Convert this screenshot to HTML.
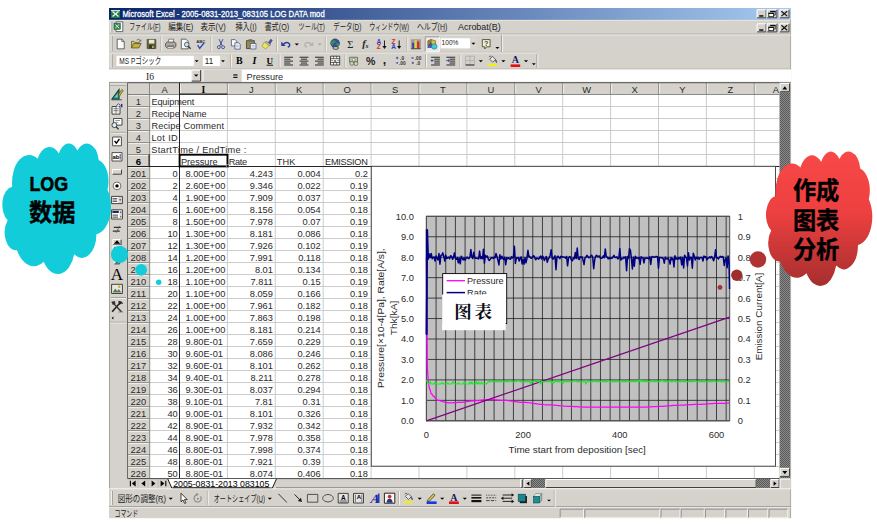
<!DOCTYPE html>
<html><head><meta charset="utf-8"><title>Microsoft Excel - LOG DATA</title><style>html,body{margin:0;padding:0;background:#fff;overflow:hidden}svg{display:block;font-family:"Liberation Sans",sans-serif}text{white-space:pre}</style></head><body>
<svg width="877" height="524" viewBox="0 0 877 524">
<defs><linearGradient id="tg" x1="0" x2="1" y1="0" y2="0"><stop offset="0" stop-color="#0a246a"/><stop offset="1" stop-color="#a6caf0"/></linearGradient><linearGradient id="rg" x1="0" x2="0" y1="0" y2="1"><stop offset="0" stop-color="#f84848"/><stop offset="0.45" stop-color="#ee4040"/><stop offset="1" stop-color="#a62e2e"/></linearGradient><pattern id="dith" width="2" height="2" patternUnits="userSpaceOnUse"><rect width="2" height="2" fill="#8a8a8a"/><rect width="1" height="1" fill="#5a5a5a"/><rect x="1" y="1" width="1" height="1" fill="#5a5a5a"/></pattern></defs>
<rect x="109" y="8" width="682" height="510.2" fill="#d5d2cb"/>
<rect x="109" y="8" width="682" height="11.9" fill="url(#tg)"/>
<line x1="109" y1="20.4" x2="791" y2="20.4" stroke="#eceae4" stroke-width="0.8"/>
<line x1="790.6" y1="20" x2="790.6" y2="518" stroke="#a6a29a" stroke-width="0.8"/>
<rect x="111" y="10" width="9" height="8" fill="#1e7a46"/>
<path d="M112.5 11.5L118.5 16.5M118.5 11.5L112.5 16.5" fill="none" stroke="#e8f4ea" stroke-width="1.3"/>
<rect x="111" y="10" width="9" height="1.2" fill="#cfe3d2"/>
<text x="122.4" y="17.3" font-size="8.8" textLength="202.3" lengthAdjust="spacingAndGlyphs" fill="#fff" stroke="#fff" stroke-width="0.28">Microsoft Excel - 2005-0831-2013_083105 LOG DATA mod</text>
<rect x="756.6" y="9.3" width="10" height="9" fill="#d5d2cb"/>
<path d="M757.1 17.8V9.8H766.1" fill="none" stroke="#ffffff" stroke-width="1"/>
<path d="M757.1 17.8H766.1V9.8" fill="none" stroke="#404040" stroke-width="1"/>
<rect x="766.6" y="9.3" width="10.8" height="9" fill="#d5d2cb"/>
<path d="M767.1 17.8V9.8H776.9" fill="none" stroke="#ffffff" stroke-width="1"/>
<path d="M767.1 17.8H776.9V9.8" fill="none" stroke="#404040" stroke-width="1"/>
<rect x="779.3" y="9.3" width="10.2" height="9" fill="#d5d2cb"/>
<path d="M779.8 17.8V9.8H789" fill="none" stroke="#ffffff" stroke-width="1"/>
<path d="M779.8 17.8H789V9.8" fill="none" stroke="#404040" stroke-width="1"/>
<rect x="759.2" y="15.2" width="4.2" height="1.5" fill="#111"/>
<path d="M770.6 11.5h4.6v3.6h-1.4" fill="none" stroke="#111" stroke-width="0.8"/>
<rect x="770.2" y="10.8" width="5.4" height="1.3" fill="#111"/>
<rect x="768.8" y="13.3" width="4.6" height="3.4" fill="#fff" stroke="#111" stroke-width="0.8"/>
<rect x="768.4" y="12.7" width="5.4" height="1.3" fill="#111"/>
<path d="M781.4 11.3l5.8 4.8M787.2 11.3l-5.8 4.8" fill="none" stroke="#111" stroke-width="1.15"/>
<rect x="756.6" y="23.3" width="10" height="9.1" fill="#d5d2cb"/>
<path d="M757.1 31.9V23.8H766.1" fill="none" stroke="#ffffff" stroke-width="1"/>
<path d="M757.1 31.9H766.1V23.8" fill="none" stroke="#404040" stroke-width="1"/>
<rect x="766.6" y="23.3" width="10.8" height="9.1" fill="#d5d2cb"/>
<path d="M767.1 31.9V23.8H776.9" fill="none" stroke="#ffffff" stroke-width="1"/>
<path d="M767.1 31.9H776.9V23.8" fill="none" stroke="#404040" stroke-width="1"/>
<rect x="779.3" y="23.3" width="10.2" height="9.1" fill="#d5d2cb"/>
<path d="M779.8 31.9V23.8H789" fill="none" stroke="#ffffff" stroke-width="1"/>
<path d="M779.8 31.9H789V23.8" fill="none" stroke="#404040" stroke-width="1"/>
<rect x="759.2" y="29.3" width="4.2" height="1.5" fill="#111"/>
<path d="M770.6 25.5h4.6v3.6h-1.4" fill="none" stroke="#111" stroke-width="0.8"/>
<rect x="770.2" y="24.8" width="5.4" height="1.3" fill="#111"/>
<rect x="768.8" y="27.3" width="4.6" height="3.4" fill="#fff" stroke="#111" stroke-width="0.8"/>
<rect x="768.4" y="26.7" width="5.4" height="1.3" fill="#111"/>
<path d="M781.4 25.3l5.8 4.9M787.2 25.3l-5.8 4.9" fill="none" stroke="#111" stroke-width="1.15"/>
<line x1="111" y1="21.5" x2="111" y2="32.5" stroke="#ffffff" stroke-width="0.9"/>
<line x1="111.9" y1="21.5" x2="111.9" y2="32.5" stroke="#9c988f" stroke-width="0.9"/>
<path d="M116 21.8h6.8v9.8h-6.8z" fill="#fff" stroke="#4a4a4a" stroke-width="0.8"/>
<rect x="114" y="23.2" width="6.4" height="6.2" fill="#2e8b57" stroke="#1c4c30" stroke-width="0.5"/>
<path d="M115.3 24.5l3.8 3.6m0-3.6l-3.8 3.6" fill="none" stroke="#eaf5ec" stroke-width="0.9"/>
<g font-size="8.8" fill="#1c1c1c" font-family="&quot;Liberation Sans&quot;, &quot;Noto Sans CJK JP&quot;, sans-serif">
<text x="129.2" y="30.3" textLength="31.3" lengthAdjust="spacingAndGlyphs">ファイル(F)</text>
<text x="168.3" y="30.3" textLength="25" lengthAdjust="spacingAndGlyphs">編集(E)</text>
<text x="200.5" y="30.3" textLength="25.2" lengthAdjust="spacingAndGlyphs">表示(V)</text>
<text x="235.4" y="30.3" textLength="21.2" lengthAdjust="spacingAndGlyphs">挿入(I)</text>
<text x="264.4" y="30.3" textLength="24.8" lengthAdjust="spacingAndGlyphs">書式(O)</text>
<text x="298.6" y="30.3" textLength="26.3" lengthAdjust="spacingAndGlyphs">ツール(T)</text>
<text x="333.3" y="30.3" textLength="28" lengthAdjust="spacingAndGlyphs">データ(D)</text>
<text x="369.2" y="30.3" textLength="39.7" lengthAdjust="spacingAndGlyphs">ウィンドウ(W)</text>
<text x="416.9" y="30.3" textLength="30.3" lengthAdjust="spacingAndGlyphs">ヘルプ(H)</text>
<text x="458" y="30.3" textLength="42.7" lengthAdjust="spacingAndGlyphs">Acrobat(B)</text>
</g>
<line x1="154.9" y1="31.3" x2="158.5" y2="31.3" stroke="#444" stroke-width="0.6"/>
<line x1="187.7" y1="31.3" x2="191.3" y2="31.3" stroke="#444" stroke-width="0.6"/>
<line x1="220.1" y1="31.3" x2="223.7" y2="31.3" stroke="#444" stroke-width="0.6"/>
<line x1="251" y1="31.3" x2="254.6" y2="31.3" stroke="#444" stroke-width="0.6"/>
<line x1="283.6" y1="31.3" x2="287.2" y2="31.3" stroke="#444" stroke-width="0.6"/>
<line x1="319.2" y1="31.3" x2="322.8" y2="31.3" stroke="#444" stroke-width="0.6"/>
<line x1="355.6" y1="31.3" x2="359.2" y2="31.3" stroke="#444" stroke-width="0.6"/>
<line x1="403.3" y1="31.3" x2="406.9" y2="31.3" stroke="#444" stroke-width="0.6"/>
<line x1="441.6" y1="31.3" x2="445.2" y2="31.3" stroke="#444" stroke-width="0.6"/>
<line x1="495.2" y1="31.3" x2="498.8" y2="31.3" stroke="#444" stroke-width="0.6"/>
<line x1="109" y1="34.2" x2="791" y2="34.2" stroke="#808080" stroke-width="0.6"/>
<line x1="109" y1="34.9" x2="791" y2="34.9" stroke="#ffffff" stroke-width="0.7"/>
<line x1="109" y1="52.3" x2="537" y2="52.3" stroke="#a8a49c" stroke-width="0.5"/>
<line x1="109" y1="53" x2="537" y2="53" stroke="#ffffff" stroke-width="0.6"/>
<line x1="109" y1="68.8" x2="791" y2="68.8" stroke="#b4b0a8" stroke-width="0.6"/>
<line x1="111.3" y1="36" x2="111.3" y2="51" stroke="#ffffff" stroke-width="0.9"/>
<line x1="112.2" y1="36" x2="112.2" y2="51" stroke="#9c988f" stroke-width="0.9"/>
<g transform="translate(120.7 44) scale(0.88) translate(-120.7 -44)" opacity="0.9">
<path d="M116.7 38.5h5.2l2.8 2.8v8.2h-8z" fill="#fff" stroke="#222" stroke-width="0.8"/>
<path d="M121.9 38.5v2.8h2.8" fill="none" stroke="#222" stroke-width="0.7"/>
</g>
<g transform="translate(136.3 44) scale(0.88) translate(-136.3 -44)" opacity="0.9">
<path d="M130.8 48.5v-7.5h3l1 1.2h5v2" fill="#d8c848" stroke="#4a4420" stroke-width="0.8"/>
<path d="M130.8 48.5l2.4-5h8.6l-2.6 5z" fill="#c0b030" stroke="#3a3418" stroke-width="0.8"/>
<path d="M136.8 39.5q2.5-1.8 4 .6" fill="none" stroke="#222" stroke-width="0.7"/>
<path d="M141.5 39v1.8h-1.8" fill="none" stroke="#222" stroke-width="0.7"/>
</g>
<g transform="translate(151.5 44) scale(0.88) translate(-151.5 -44)" opacity="0.9">
<rect x="146.5" y="38.8" width="10" height="10.4" fill="#5c5a18"/>
<rect x="148.5" y="38.8" width="6.2" height="4.6" fill="#ecece4"/>
<rect x="148.7" y="45.2" width="5.8" height="4" fill="#2a2a10"/>
<rect x="152.3" y="46" width="1.6" height="2.6" fill="#c8c8c0"/>
<path d="M146.5 38.8h10v10.4h-10z" fill="none" stroke="#222" stroke-width="0.6"/>
</g>
<line x1="161" y1="36.5" x2="161" y2="51.5" stroke="#a29e96" stroke-width="0.8"/>
<line x1="161.8" y1="36.5" x2="161.8" y2="51.5" stroke="#ffffff" stroke-width="0.8"/>
<g transform="translate(170.8 44) scale(0.88) translate(-170.8 -44)" opacity="0.9">
<path d="M167.6 42.5l1-4h5.5l-.6 4z" fill="#fff" stroke="#333" stroke-width="0.7"/>
<path d="M164.8 46.6v-3.2l2-1.6h8.4l1.4 1.4v3.4l-1.8 2h-8.2z" fill="#a8a49c" stroke="#2c2c2c" stroke-width="0.8"/>
<path d="M166.8 46.4h7.6" fill="none" stroke="#505050" stroke-width="1.2"/>
<rect x="167.4" y="47.4" width="6" height="1" fill="#e8e8d8"/>
</g>
<g transform="translate(185.7 44) scale(0.88) translate(-185.7 -44)" opacity="0.9">
<path d="M180.7 38.5h5.2l2.6 2.6v8.4h-7.8z" fill="#fff" stroke="#222" stroke-width="0.8"/>
<circle cx="186.9" cy="44.6" r="2.6" fill="#bfe6f2" stroke="#234" stroke-width="0.9"/>
<path d="M188.7 46.6l2.6 2.8" fill="none" stroke="#222" stroke-width="1.4"/>
</g>
<g transform="translate(200.8 44) scale(0.88) translate(-200.8 -44)" opacity="0.9">
<text x="200.8" y="42.8" font-size="4.8" text-anchor="middle" font-weight="bold" fill="#222">ABC</text>
<path d="M197.2 45.4l2.4 3.6l5-6.4" fill="none" stroke="#1838b8" stroke-width="1.5"/>
</g>
<line x1="211" y1="36.5" x2="211" y2="51.5" stroke="#a29e96" stroke-width="0.8"/>
<line x1="211.8" y1="36.5" x2="211.8" y2="51.5" stroke="#ffffff" stroke-width="0.8"/>
<g transform="translate(221 44) scale(0.88) translate(-221 -44)" opacity="0.9">
<path d="M218.8 38.5l3.4 7.4M223.2 38.5l-3.4 7.4" fill="none" stroke="#283c9c" stroke-width="1.1"/>
<circle cx="218.6" cy="47.6" r="1.7" fill="none" stroke="#283c9c" stroke-width="1"/>
<circle cx="223.4" cy="47.6" r="1.7" fill="none" stroke="#283c9c" stroke-width="1"/>
</g>
<g transform="translate(235.8 44) scale(0.88) translate(-235.8 -44)" opacity="0.9">
<path d="M230.8 39h4.2l1.8 1.8v5.4h-6z" fill="#fff" stroke="#223070" stroke-width="0.8"/>
<path d="M234.8 42.6h4.2l1.8 1.8v5.4h-6z" fill="#fff" stroke="#223070" stroke-width="0.8"/>
<path d="M235.8 45.4h3.6M235.8 47.2h3.6" fill="none" stroke="#6878b8" stroke-width="0.6"/>
</g>
<g transform="translate(251.2 44) scale(0.88) translate(-251.2 -44)" opacity="0.9">
<path d="M245.8 40.2h9v9h-9z" fill="#8c8648" stroke="#2c2a14" stroke-width="0.9"/>
<rect x="248.2" y="38.6" width="4.2" height="2.6" fill="#606060"/>
<path d="M250.2 43.4h6.4v6.2h-6.4z" fill="#fff" stroke="#283878" stroke-width="0.8"/>
<path d="M251.6 45.6h3.6M251.6 47.4h3.6" fill="none" stroke="#6878b8" stroke-width="0.6"/>
</g>
<g transform="translate(267.2 44) scale(0.88) translate(-267.2 -44)" opacity="0.9">
<path d="M268.2 42.8l3-4.2l1.8 1.2l-2.8 4.4z" fill="#384898" stroke="#202858" stroke-width="0.6"/>
<path d="M266 41l5 3.2l-1.2 1.8l-5-3.2z" fill="#c8c8c8" stroke="#333" stroke-width="0.6"/>
<path d="M263.8 41.8l5.4 3.6l-3.6 4.4l-4.4-3.2z" fill="#f0e850" stroke="#8a8420" stroke-width="0.7"/>
</g>
<line x1="276.6" y1="36.5" x2="276.6" y2="51.5" stroke="#a29e96" stroke-width="0.8"/>
<line x1="277.4" y1="36.5" x2="277.4" y2="51.5" stroke="#ffffff" stroke-width="0.8"/>
<g transform="translate(286 44) scale(0.88) translate(-286 -44)" opacity="0.9">
<path d="M283 44.4q4-4 7-.4q1 2.4-2 3.6" fill="none" stroke="#182c90" stroke-width="1.6"/>
<path d="M280.6 41.2v5h5z" fill="#182c90"/>
</g>
<path d="M294.6 43.4H299L296.8 45.6Z" fill="#000"/>
<g transform="translate(308.6 44) scale(0.88) translate(-308.6 -44)" opacity="0.9">
<path d="M311.6 44.4q-4-4-7-.4q-1 2.4 2 3.6" fill="none" stroke="#b4b0a8" stroke-width="1.6"/>
<path d="M314 41.2v5h-5z" fill="#b4b0a8"/>
</g>
<path d="M317.6 43.45H321.8L319.7 45.55Z" fill="#a8a49c"/>
<line x1="325.4" y1="36.5" x2="325.4" y2="51.5" stroke="#a29e96" stroke-width="0.8"/>
<line x1="326.2" y1="36.5" x2="326.2" y2="51.5" stroke="#ffffff" stroke-width="0.8"/>
<g transform="translate(335.1 44) scale(0.88) translate(-335.1 -44)" opacity="0.9">
<circle cx="335.1" cy="43.2" r="4.9" fill="#1c48a4" stroke="#0c1c48" stroke-width="0.8"/>
<path d="M332.1 40.4q2.6-1.4 3.8.6q-.4 2-2.6 2.2q-1.6 1.2-.2 3q-2.6-.6-3.2-3.4z" fill="#2c8c3c"/>
<path d="M336.7 43q2.4-.6 3 .8q-.4 2.4-2.2 3.4q-1.4-1.6-.8-4.2z" fill="#2c8c3c"/>
<path d="M332.7 48.6q0-1.6 1.8-1.6h2.6q1.8 0 1.8 1.6q0 1.4-1.8 1.4h-2.6q-1.8 0-1.8-1.4z" fill="#c8c8c8" stroke="#202020" stroke-width="0.9"/>
</g>
<text x="350.2" y="47.6" font-size="10.5" text-anchor="middle" font-family="Liberation Serif" fill="#222">Σ</text>
<text x="362.2" y="47.4" font-size="10.5" font-weight="bold" font-style="italic" font-family="Liberation Serif" fill="#222">f</text>
<text x="365.4" y="48" font-size="6" font-weight="bold" font-style="italic" font-family="Liberation Serif" fill="#222">x</text>
<g transform="translate(381.3 44) scale(0.88) translate(-381.3 -44)" opacity="0.9">
<text x="378.5" y="43.6" font-size="7.4" text-anchor="middle" font-weight="bold" fill="#1830c0">A</text>
<text x="378.5" y="50" font-size="7.4" text-anchor="middle" font-weight="bold" fill="#d01818">Z</text>
<path d="M384.9 40v7" fill="none" stroke="#000" stroke-width="1.1"/>
<path d="M382.5 46.2h4.8l-2.4 3.4z" fill="#000"/>
</g>
<g transform="translate(396 44) scale(0.88) translate(-396 -44)" opacity="0.9">
<text x="393.2" y="43.6" font-size="7.4" text-anchor="middle" font-weight="bold" fill="#d01818">Z</text>
<text x="393.2" y="50" font-size="7.4" text-anchor="middle" font-weight="bold" fill="#1830c0">A</text>
<path d="M399.6 40v7" fill="none" stroke="#000" stroke-width="1.1"/>
<path d="M397.2 46.2h4.8l-2.4 3.4z" fill="#000"/>
</g>
<line x1="407" y1="36.5" x2="407" y2="51.5" stroke="#a29e96" stroke-width="0.8"/>
<line x1="407.8" y1="36.5" x2="407.8" y2="51.5" stroke="#ffffff" stroke-width="0.8"/>
<g transform="translate(415.8 44) scale(0.88) translate(-415.8 -44)" opacity="0.9">
<rect x="410.2" y="38.6" width="11.4" height="11" fill="#9c9890"/>
<rect x="411.6" y="42.6" width="2.4" height="6.4" fill="#2038c0"/>
<rect x="414.4" y="39.6" width="2.4" height="9.4" fill="#e8d820"/>
<rect x="417.2" y="41.2" width="2.6" height="7.8" fill="#d81818"/>
<path d="M410.4 49.4h11" fill="none" stroke="#202020" stroke-width="0.9"/>
</g>
<rect x="424.7" y="36.3" width="14.7" height="15.6" fill="#eceae6"/>
<path d="M425.2 51.9V36.8H439.4" fill="none" stroke="#808080" stroke-width="0.8"/>
<path d="M425.2 51.9H439.4V36.8" fill="none" stroke="#ffffff" stroke-width="0.8"/>
<g transform="translate(432 44) scale(0.88) translate(-432 -44)" opacity="0.9">
<path d="M430.8 38.8l5.2 1.6v5.4l-5.2-1.2z" fill="#d8b828" stroke="#4a3c10" stroke-width="0.6"/>
<path d="M427.2 40.4l3.6-1.6v5.8l-3.6 1.8z" fill="#a07818" stroke="#4a3c10" stroke-width="0.6"/>
<path d="M427 48l3.4-5.4l3.2 5.4z" fill="#2848c8" stroke="#101c60" stroke-width="0.6"/>
<circle cx="434.6" cy="46.8" r="3.1" fill="#28c8d8" stroke="#106070" stroke-width="0.6"/>
</g>
<rect x="440.6" y="38.2" width="29.4" height="10.2" fill="#fff"/>
<rect x="470" y="38.2" width="7" height="10.2" fill="#d9d6cf"/>
<path d="M471.3 42.75H475.5L473.4 44.85Z" fill="#000"/>
<text x="441.6" y="45.4" font-size="7.4" textLength="16.8" lengthAdjust="spacingAndGlyphs" fill="#1c1c1c">100%</text>
<g transform="translate(486.2 44) scale(0.88) translate(-486.2 -44)" opacity="0.9">
<path d="M481.8 39h8.8v8.2h-4l-2 2.4v-2.4h-2.8z" fill="#fbf8b8" stroke="#222" stroke-width="0.9"/>
<text x="486.2" y="45.8" font-size="8" text-anchor="middle" font-weight="bold" fill="#1828a8">?</text>
</g>
<path d="M495.4 47H499.4L497.4 49Z" fill="#000"/>
<line x1="501.8" y1="35" x2="501.8" y2="52" stroke="#808080" stroke-width="0.8"/>
<line x1="502.6" y1="35" x2="502.6" y2="52" stroke="#ffffff" stroke-width="0.8"/>
<line x1="111.3" y1="54.5" x2="111.3" y2="67.5" stroke="#ffffff" stroke-width="0.9"/>
<line x1="112.2" y1="54.5" x2="112.2" y2="67.5" stroke="#9c988f" stroke-width="0.9"/>
<rect x="116.5" y="55.8" width="77.4" height="10.2" fill="#fff"/>
<rect x="193.9" y="55.8" width="5.6" height="10.2" fill="#d9d6cf"/>
<path d="M194.8 60.25H198.6L196.7 62.15Z" fill="#000"/>
<text x="119.3" y="64.4" font-size="9" textLength="42.1" lengthAdjust="spacingAndGlyphs" fill="#1c1c1c" font-family="&quot;Liberation Sans&quot;, &quot;Noto Sans CJK JP&quot;, sans-serif">MS Pゴシック</text>
<rect x="202.8" y="55.8" width="17.2" height="10.2" fill="#fff"/>
<rect x="220" y="55.8" width="6.2" height="10.2" fill="#d9d6cf"/>
<path d="M221.1 60.25H224.9L223 62.15Z" fill="#000"/>
<text x="204.8" y="64.3" font-size="9.6" textLength="8.4" lengthAdjust="spacingAndGlyphs" fill="#1c1c1c">11</text>
<line x1="230.6" y1="54.5" x2="230.6" y2="67.5" stroke="#a29e96" stroke-width="0.8"/>
<line x1="231.4" y1="54.5" x2="231.4" y2="67.5" stroke="#ffffff" stroke-width="0.8"/>
<text x="239.4" y="64.3" font-size="10" text-anchor="middle" font-weight="bold" font-family="Liberation Serif">B</text>
<text x="254.4" y="64.3" font-size="10" text-anchor="middle" font-weight="bold" font-style="italic" font-family="Liberation Serif">I</text>
<text x="269.8" y="63.6" font-size="9" text-anchor="middle" font-weight="bold" font-family="Liberation Serif">U</text>
<line x1="266.6" y1="65.2" x2="273" y2="65.2" stroke="#000" stroke-width="0.9"/>
<line x1="279.2" y1="54.5" x2="279.2" y2="67.5" stroke="#a29e96" stroke-width="0.8"/>
<line x1="280" y1="54.5" x2="280" y2="67.5" stroke="#ffffff" stroke-width="0.8"/>
<g transform="translate(288.6 60.6) scale(0.88) translate(-288.6 -60.6)" opacity="0.9">
<rect x="283.6" y="56.2" width="10" height="1.15" fill="#1c1c1c"/>
<rect x="283.6" y="58.4" width="7" height="1.15" fill="#1c1c1c"/>
<rect x="283.6" y="60.6" width="10" height="1.15" fill="#1c1c1c"/>
<rect x="283.6" y="62.8" width="7" height="1.15" fill="#1c1c1c"/>
<rect x="283.6" y="65" width="10" height="1.15" fill="#1c1c1c"/>
</g>
<g transform="translate(304 60.6) scale(0.88) translate(-304 -60.6)" opacity="0.9">
<rect x="299" y="56.2" width="10" height="1.15" fill="#1c1c1c"/>
<rect x="300.5" y="58.4" width="7" height="1.15" fill="#1c1c1c"/>
<rect x="299" y="60.6" width="10" height="1.15" fill="#1c1c1c"/>
<rect x="300.5" y="62.8" width="7" height="1.15" fill="#1c1c1c"/>
<rect x="299" y="65" width="10" height="1.15" fill="#1c1c1c"/>
</g>
<g transform="translate(319.4 60.6) scale(0.88) translate(-319.4 -60.6)" opacity="0.9">
<rect x="314.4" y="56.2" width="10" height="1.15" fill="#1c1c1c"/>
<rect x="317.4" y="58.4" width="7" height="1.15" fill="#1c1c1c"/>
<rect x="314.4" y="60.6" width="10" height="1.15" fill="#1c1c1c"/>
<rect x="317.4" y="62.8" width="7" height="1.15" fill="#1c1c1c"/>
<rect x="314.4" y="65" width="10" height="1.15" fill="#1c1c1c"/>
</g>
<g transform="translate(335.1 60.6) scale(0.88) translate(-335.1 -60.6)" opacity="0.9">
<path d="M329.9 55.6h10.4v10h-10.4z" fill="#fff" stroke="#111" stroke-width="0.9"/>
<path d="M329.9 58.4h10.4M329.9 62.8h10.4" fill="none" stroke="#111" stroke-width="0.8"/>
<path d="M333.3 55.6v2.8M336.9 55.6v2.8M333.3 62.8v2.8M336.9 62.8v2.8" fill="none" stroke="#111" stroke-width="0.7"/>
<text x="335.1" y="62.3" font-size="5" text-anchor="middle" font-weight="bold" fill="#222">a</text>
<path d="M330.7 60.6h2M337.5 60.6h2" fill="none" stroke="#223" stroke-width="0.7"/>
</g>
<line x1="345" y1="54.5" x2="345" y2="67.5" stroke="#a29e96" stroke-width="0.8"/>
<line x1="345.8" y1="54.5" x2="345.8" y2="67.5" stroke="#ffffff" stroke-width="0.8"/>
<g transform="translate(354 60.6) scale(0.88) translate(-354 -60.6)" opacity="0.9">
<path d="M349 56.8h9v5.6h-9z" fill="#b4c4b0" stroke="#3c4c3c" stroke-width="0.8"/>
<circle cx="353.6" cy="59.6" r="1.6" fill="#e8f0e0" stroke="#2c4c2c" stroke-width="0.5"/>
<circle cx="351.6" cy="63.8" r="2.2" fill="#d8d4b0" stroke="#3c3c2c" stroke-width="0.7"/>
<circle cx="356.2" cy="64" r="2.2" fill="#d8d4b0" stroke="#3c3c2c" stroke-width="0.7"/>
</g>
<text x="370.6" y="65" font-size="10.6" text-anchor="middle" font-weight="bold" fill="#1c1c1c">%</text>
<text x="384.6" y="64.2" font-size="12.5" text-anchor="middle" font-weight="bold" fill="#1c1c1c">,</text>
<g transform="translate(400.7 60.6) scale(0.88) translate(-400.7 -60.6)" opacity="0.9">
<path d="M395.3 57.6h2.8m-1.4-1.4v2.8" fill="none" stroke="#1828b0" stroke-width="0.9"/>
<path d="M395.1 63.2h2.4l-1-1m1 1l-1 1" fill="none" stroke="#1828b0" stroke-width="0.8"/>
<text x="402.3" y="60.2" font-size="5.4" text-anchor="middle" font-weight="bold" fill="#222">.0</text>
<text x="402.5" y="65.6" font-size="5.4" text-anchor="middle" font-weight="bold" fill="#222">.00</text>
</g>
<g transform="translate(416.6 60.6) scale(0.88) translate(-416.6 -60.6)" opacity="0.9">
<path d="M411 63.2h2.6m-1.3-1.3v2.6" fill="none" stroke="#1828b0" stroke-width="0.9"/>
<path d="M413.6 57.6h-2.6l1-1m-1 1l1 1" fill="none" stroke="#1828b0" stroke-width="0.8"/>
<text x="418.2" y="60.2" font-size="5.4" text-anchor="middle" font-weight="bold" fill="#222">.00</text>
<text x="418.4" y="65.6" font-size="5.4" text-anchor="middle" font-weight="bold" fill="#222">.0</text>
</g>
<line x1="425.7" y1="54.5" x2="425.7" y2="67.5" stroke="#a29e96" stroke-width="0.8"/>
<line x1="426.5" y1="54.5" x2="426.5" y2="67.5" stroke="#ffffff" stroke-width="0.8"/>
<g transform="translate(435.5 60.6) scale(0.88) translate(-435.5 -60.6)" opacity="0.9">
<rect x="430.5" y="56.2" width="10" height="1.15" fill="#1c1c1c"/>
<rect x="434.1" y="58.4" width="6.4" height="1.15" fill="#1c1c1c"/>
<rect x="434.1" y="60.6" width="6.4" height="1.15" fill="#1c1c1c"/>
<rect x="434.1" y="62.8" width="6.4" height="1.15" fill="#1c1c1c"/>
<rect x="430.5" y="65" width="10" height="1.15" fill="#1c1c1c"/>
<path d="M433.5 60.6h-3.2" fill="none" stroke="#1828b0" stroke-width="1"/>
<path d="M431.9 58.8l-1.8 1.8l1.8 1.8z" fill="#1828b0"/>
</g>
<g transform="translate(450.8 60.6) scale(0.88) translate(-450.8 -60.6)" opacity="0.9">
<rect x="445.8" y="56.2" width="10" height="1.15" fill="#1c1c1c"/>
<rect x="449.4" y="58.4" width="6.4" height="1.15" fill="#1c1c1c"/>
<rect x="449.4" y="60.6" width="6.4" height="1.15" fill="#1c1c1c"/>
<rect x="449.4" y="62.8" width="6.4" height="1.15" fill="#1c1c1c"/>
<rect x="445.8" y="65" width="10" height="1.15" fill="#1c1c1c"/>
<path d="M445.6 60.6h3.2" fill="none" stroke="#1828b0" stroke-width="1"/>
<path d="M447.8 58.8l1.8 1.8l-1.8 1.8z" fill="#1828b0"/>
</g>
<line x1="460" y1="54.5" x2="460" y2="67.5" stroke="#a29e96" stroke-width="0.8"/>
<line x1="460.8" y1="54.5" x2="460.8" y2="67.5" stroke="#ffffff" stroke-width="0.8"/>
<g transform="translate(470 60.6) scale(0.88) translate(-470 -60.6)" opacity="0.9">
<path d="M465 55.6h10v10h-10zM470 55.6v10M465 60.6h10" fill="none" stroke="#a8a49c" stroke-width="0.8"/>
<path d="M465 65.6h10" fill="none" stroke="#202020" stroke-width="1.2"/>
</g>
<path d="M478.7 60.15H482.9L480.8 62.25Z" fill="#000"/>
<g transform="translate(492.7 60.6) scale(0.88) translate(-492.7 -60.6)" opacity="0.9">
<path d="M489.3 59l3.2-3.2l3.6 3.6l-3.4 3z" fill="#e8e8e8" stroke="#222" stroke-width="0.8"/>
<path d="M495.9 59.4q1.8 1.4 1.4 3.6q-1.6-.6-1.4-3.6z" fill="#2848c0" stroke="#102060" stroke-width="0.5"/>
<path d="M491.3 56q-2-1.8-2.6.6" fill="none" stroke="#222" stroke-width="0.7"/>
<rect x="487.5" y="64.2" width="10" height="2.6" fill="#f8f000"/>
</g>
<path d="M501.3 60.15H505.5L503.4 62.25Z" fill="#000"/>
<text x="515.3" y="63.4" font-size="10" text-anchor="middle" font-weight="bold" font-family="Liberation Serif" fill="#14146c">A</text>
<rect x="510.6" y="64.4" width="9.6" height="2.6" fill="#e41010"/>
<path d="M523.9 60.15H528.1L526 62.25Z" fill="#000"/>
<path d="M531.9 63.25H535.7L533.8 65.15Z" fill="#000"/>
<line x1="537" y1="54" x2="537" y2="68" stroke="#808080" stroke-width="0.8"/>
<line x1="537.8" y1="54" x2="537.8" y2="68" stroke="#ffffff" stroke-width="0.8"/>
<rect x="109" y="69.5" width="682" height="13" fill="#fff"/>
<rect x="191.3" y="69.5" width="50.4" height="12.6" fill="#d5d2cb"/>
<rect x="191.3" y="69.6" width="9.8" height="12" fill="#d5d2cb"/>
<path d="M191.8 81.1V70.1H200.6" fill="none" stroke="#ffffff" stroke-width="1"/>
<path d="M191.8 81.1H200.6V70.1" fill="none" stroke="#404040" stroke-width="1"/>
<path d="M194 74.5H198.4L196.2 76.7Z" fill="#000"/>
<line x1="203" y1="69.5" x2="203" y2="82" stroke="#ffffff" stroke-width="0.8"/>
<text x="150" y="79.7" font-size="9.6" text-anchor="middle" font-family="Liberation Serif" fill="#222">I6</text>
<rect x="233.3" y="74.4" width="4.2" height="1.1" fill="#000"/>
<rect x="233.3" y="76.8" width="4.2" height="1.1" fill="#000"/>
<text x="246.6" y="79.8" font-size="9.2" textLength="36.5" fill="#2a2a2a">Pressure</text>
<line x1="109" y1="82.4" x2="791" y2="82.4" stroke="#808080" stroke-width="0.8"/>
<rect x="109" y="83" width="18.5" height="406" fill="#d5d2cb"/>
<line x1="109.5" y1="83" x2="109.5" y2="489" stroke="#a09c94" stroke-width="0.9"/>
<line x1="110" y1="84.2" x2="126.5" y2="84.2" stroke="#ffffff" stroke-width="0.8"/>
<line x1="110" y1="85.2" x2="126.5" y2="85.2" stroke="#808080" stroke-width="0.6"/>
<g transform="translate(117 94.2) scale(1.0) translate(-117 -94.2)" opacity="1">
<path d="M112 99l7-9.4v9.4z" fill="#28b0a0" stroke="#083830" stroke-width="1.1"/>
<path d="M115.4 96.8l2-2.6v2.6z" fill="#d5d2cb"/>
<path d="M118.2 95.2l3.6-5.6l1.4 1l-3.6 5.4z" fill="#e8c020" stroke="#3c3008" stroke-width="0.6"/>
<path d="M111.6 99.8h10.4" fill="none" stroke="#333" stroke-width="0.8"/>
</g>
<g transform="translate(117 109.1) scale(1.0) translate(-117 -109.1)" opacity="1">
<path d="M112 106.5h8v7.6h-8z" fill="#f4f4f4" stroke="#222" stroke-width="0.8"/>
<path d="M113.4 108.7h5.2M113.4 110.7h5.2M116 106.7v7" fill="none" stroke="#444" stroke-width="0.6"/>
<path d="M116 106.3l2.4-2.6l2 1.6l-1.6 1.6" fill="#e8e8e8" stroke="#222" stroke-width="0.7"/>
<rect x="121" y="103.9" width="1.4" height="3.4" fill="#1828c8"/>
</g>
<g transform="translate(117 123.5) scale(1.0) translate(-117 -123.5)" opacity="1">
<path d="M113.6 118.5h8.4v6.6h-8.4z" fill="#fff" stroke="#222" stroke-width="0.8"/>
<path d="M115.4 120.5h4.6M115.4 122.3h3" fill="none" stroke="#555" stroke-width="0.6"/>
<circle cx="114.4" cy="125.1" r="2.5" fill="#d8eef8" stroke="#222" stroke-width="0.8"/>
<path d="M116.2 126.9l2.4 2.4" fill="none" stroke="#222" stroke-width="1.2"/>
</g>
<line x1="111" y1="132.4" x2="126" y2="132.4" stroke="#808080" stroke-width="0.7"/>
<line x1="111" y1="133.2" x2="126" y2="133.2" stroke="#ffffff" stroke-width="0.7"/>
<g transform="translate(117 141.4) scale(1.0) translate(-117 -141.4)" opacity="1">
<path d="M112.6 137h8.8v8.8h-8.8z" fill="#fff" stroke="#505050" stroke-width="1"/>
<path d="M114.6 141l1.8 2.2l3-4.2" fill="none" stroke="#000" stroke-width="1.4"/>
</g>
<g transform="translate(117 156.8) scale(1.0) translate(-117 -156.8)" opacity="1">
<path d="M112 152.6h10v8.4h-10z" fill="#fff" stroke="#404040" stroke-width="0.9"/>
<text x="116" y="159.4" font-size="6" text-anchor="middle" font-weight="bold">ab</text>
<line x1="120.2" y1="154" x2="120.2" y2="159.6" stroke="#000" stroke-width="0.7"/>
</g>
<g transform="translate(117 171.7) scale(1.0) translate(-117 -171.7)" opacity="1">
<rect x="112" y="169.1" width="10" height="5.6" fill="#d5d2cb"/>
<path d="M112.5 174.2V169.6H121.5" fill="none" stroke="#ffffff" stroke-width="1"/>
<path d="M112.5 174.2H121.5V169.6" fill="none" stroke="#404040" stroke-width="1"/>
</g>
<g transform="translate(117 185.9) scale(1.0) translate(-117 -185.9)" opacity="1">
<circle cx="117" cy="185.9" r="3.9" fill="#fff" stroke="#606060" stroke-width="0.9"/>
<circle cx="117" cy="185.9" r="1.7" fill="#000"/>
</g>
<g transform="translate(117 200) scale(1.0) translate(-117 -200)" opacity="1">
<path d="M111.6 196.4h10.8v7.2h-10.8z" fill="#fff" stroke="#303030" stroke-width="0.9"/>
<rect x="118.4" y="197" width="3.6" height="6" fill="#d5d2cb"/>
<path d="M119 199.4H121.4L120.2 200.6Z" fill="#000"/>
<rect x="112.6" y="198.2" width="4.6" height="1.2" fill="#404048"/>
<rect x="112.6" y="200.6" width="4.6" height="1.2" fill="#404048"/>
</g>
<g transform="translate(117 214.4) scale(1.0) translate(-117 -214.4)" opacity="1">
<path d="M111.6 209.8h10.8v9.2h-10.8z" fill="#fff" stroke="#303030" stroke-width="0.9"/>
<rect x="112.4" y="210.8" width="6.4" height="2.2" fill="#202868"/>
<rect x="112.6" y="214.6" width="5.4" height="1" fill="#404040"/>
<rect x="112.6" y="216.6" width="5.4" height="1" fill="#404040"/>
<rect x="119.6" y="210.4" width="2.4" height="8" fill="#d5d2cb"/>
<path d="M120 212.4h1.6l-.8-1.2zM120 216.4h1.6l-.8 1.2z" fill="#000"/>
</g>
<g transform="translate(117 229.8) scale(1.0) translate(-117 -229.8)" opacity="1">
<path d="M113.8 227.4h7M112.8 231.2h7" fill="none" stroke="#333" stroke-width="1.3"/>
<path d="M119.6 225.8l-3.4 7" fill="none" stroke="#555" stroke-width="0.8"/>
</g>
<g transform="translate(117 244.4) scale(1) translate(-117 -244.4)" opacity="1">
<rect x="112.4" y="239" width="9.2" height="6.4" fill="#d5d2cb"/>
<path d="M112.9 244.9V239.5H121.1" fill="none" stroke="#ffffff" stroke-width="1"/>
<path d="M112.9 244.9H121.1V239.5" fill="none" stroke="#404040" stroke-width="1"/>
<rect x="112.4" y="245.4" width="9.2" height="6.4" fill="#d5d2cb"/>
<path d="M112.9 251.3V245.9H121.1" fill="none" stroke="#ffffff" stroke-width="1"/>
<path d="M112.9 251.3H121.1V245.9" fill="none" stroke="#404040" stroke-width="1"/>
<path d="M113.8 243.8h6.4l-3.2-3.6zM113.8 247.4h6.4l-3.2 3.4z" fill="#000"/>
</g>
<g transform="translate(117 259.4) scale(1.0) translate(-117 -259.4)" opacity="1">
<rect x="113.8" y="254.4" width="6.4" height="10" fill="#d5d2cb"/>
<path d="M114.3 263.9V254.9H119.7" fill="none" stroke="#ffffff" stroke-width="1"/>
<path d="M114.3 263.9H119.7V254.9" fill="none" stroke="#404040" stroke-width="1"/>
<path d="M115.4 257h3.2l-1.6-1.8zM115.4 261.8h3.2l-1.6 1.8z" fill="#000"/>
</g>
<g transform="translate(117 274.5) scale(1.0) translate(-117 -274.5)" opacity="1">
<text x="117" y="280.1" font-size="17" text-anchor="middle" font-family="Liberation Serif">A</text>
</g>
<g transform="translate(117 288.9) scale(1.0) translate(-117 -288.9)" opacity="1">
<path d="M111.6 284.3h10.8v9.2h-10.8z" fill="#e8e8e0" stroke="#303030" stroke-width="0.9"/>
<path d="M112.6 292.5l2.6-4l2 2.4l1.6-1.8l2.6 3.4z" fill="#607858"/>
<circle cx="119.2" cy="286.7" r="1.2" fill="#c8b030"/>
</g>
<line x1="111" y1="297.6" x2="126" y2="297.6" stroke="#808080" stroke-width="0.7"/>
<line x1="111" y1="298.4" x2="126" y2="298.4" stroke="#ffffff" stroke-width="0.7"/>
<g transform="translate(117 306.7) scale(1.1) translate(-117 -306.7)" opacity="1">
<path d="M112.6 311.3l7.4-8.4" fill="none" stroke="#222" stroke-width="1.5"/>
<path d="M118 301.7q3.6-.6 4.6 2.6l-1.8-.6l-1.4 1.4z" fill="#222"/>
<path d="M121 311.3l-7-7.4" fill="none" stroke="#333" stroke-width="1.3"/>
<path d="M111.8 302.1l3.2-.6l.6 2.6l-2.4 1z" fill="#333"/>
<path d="M118.4 311.5h4" fill="none" stroke="#555" stroke-width="0.8" stroke-dasharray="1 0.6"/>
</g>
<path d="M111.6 318l1.8-1.6v3.2z" fill="#000"/>
<line x1="110" y1="322.2" x2="127" y2="322.2" stroke="#808080" stroke-width="0.6"/>
<line x1="110" y1="323" x2="127" y2="323" stroke="#ffffff" stroke-width="0.6"/>
<rect x="127.5" y="82.6" width="652.1" height="395.9" fill="#fff"/>
<rect x="127.5" y="82.6" width="652.1" height="11.9" fill="#d5d2cb"/>
<rect x="127.5" y="82.6" width="22.2" height="395.9" fill="#d5d2cb"/>
<line x1="149.7" y1="106.5" x2="779.6" y2="106.5" stroke="#c6c6c6" stroke-width="0.9"/>
<line x1="149.7" y1="118.5" x2="779.6" y2="118.5" stroke="#c6c6c6" stroke-width="0.9"/>
<line x1="149.7" y1="130.5" x2="779.6" y2="130.5" stroke="#c6c6c6" stroke-width="0.9"/>
<line x1="149.7" y1="142.5" x2="779.6" y2="142.5" stroke="#c6c6c6" stroke-width="0.9"/>
<line x1="149.7" y1="154.5" x2="779.6" y2="154.5" stroke="#c6c6c6" stroke-width="0.9"/>
<line x1="149.7" y1="166.5" x2="779.6" y2="166.5" stroke="#c6c6c6" stroke-width="0.9"/>
<line x1="149.7" y1="178.5" x2="779.6" y2="178.5" stroke="#c6c6c6" stroke-width="0.9"/>
<line x1="149.7" y1="190.5" x2="779.6" y2="190.5" stroke="#c6c6c6" stroke-width="0.9"/>
<line x1="149.7" y1="202.5" x2="779.6" y2="202.5" stroke="#c6c6c6" stroke-width="0.9"/>
<line x1="149.7" y1="214.5" x2="779.6" y2="214.5" stroke="#c6c6c6" stroke-width="0.9"/>
<line x1="149.7" y1="226.5" x2="779.6" y2="226.5" stroke="#c6c6c6" stroke-width="0.9"/>
<line x1="149.7" y1="238.5" x2="779.6" y2="238.5" stroke="#c6c6c6" stroke-width="0.9"/>
<line x1="149.7" y1="250.5" x2="779.6" y2="250.5" stroke="#c6c6c6" stroke-width="0.9"/>
<line x1="149.7" y1="262.5" x2="779.6" y2="262.5" stroke="#c6c6c6" stroke-width="0.9"/>
<line x1="149.7" y1="274.5" x2="779.6" y2="274.5" stroke="#c6c6c6" stroke-width="0.9"/>
<line x1="149.7" y1="286.5" x2="779.6" y2="286.5" stroke="#c6c6c6" stroke-width="0.9"/>
<line x1="149.7" y1="298.5" x2="779.6" y2="298.5" stroke="#c6c6c6" stroke-width="0.9"/>
<line x1="149.7" y1="310.5" x2="779.6" y2="310.5" stroke="#c6c6c6" stroke-width="0.9"/>
<line x1="149.7" y1="322.5" x2="779.6" y2="322.5" stroke="#c6c6c6" stroke-width="0.9"/>
<line x1="149.7" y1="334.5" x2="779.6" y2="334.5" stroke="#c6c6c6" stroke-width="0.9"/>
<line x1="149.7" y1="346.5" x2="779.6" y2="346.5" stroke="#c6c6c6" stroke-width="0.9"/>
<line x1="149.7" y1="358.5" x2="779.6" y2="358.5" stroke="#c6c6c6" stroke-width="0.9"/>
<line x1="149.7" y1="370.5" x2="779.6" y2="370.5" stroke="#c6c6c6" stroke-width="0.9"/>
<line x1="149.7" y1="382.5" x2="779.6" y2="382.5" stroke="#c6c6c6" stroke-width="0.9"/>
<line x1="149.7" y1="394.5" x2="779.6" y2="394.5" stroke="#c6c6c6" stroke-width="0.9"/>
<line x1="149.7" y1="406.5" x2="779.6" y2="406.5" stroke="#c6c6c6" stroke-width="0.9"/>
<line x1="149.7" y1="418.5" x2="779.6" y2="418.5" stroke="#c6c6c6" stroke-width="0.9"/>
<line x1="149.7" y1="430.5" x2="779.6" y2="430.5" stroke="#c6c6c6" stroke-width="0.9"/>
<line x1="149.7" y1="442.5" x2="779.6" y2="442.5" stroke="#c6c6c6" stroke-width="0.9"/>
<line x1="149.7" y1="454.5" x2="779.6" y2="454.5" stroke="#c6c6c6" stroke-width="0.9"/>
<line x1="149.7" y1="466.5" x2="779.6" y2="466.5" stroke="#c6c6c6" stroke-width="0.9"/>
<line x1="149.7" y1="478.5" x2="779.6" y2="478.5" stroke="#c6c6c6" stroke-width="0.9"/>
<line x1="179.5" y1="94.5" x2="179.5" y2="478.5" stroke="#c6c6c6" stroke-width="0.9"/>
<line x1="227.4" y1="94.5" x2="227.4" y2="478.5" stroke="#c6c6c6" stroke-width="0.9"/>
<line x1="275.3" y1="94.5" x2="275.3" y2="478.5" stroke="#c6c6c6" stroke-width="0.9"/>
<line x1="323.2" y1="94.5" x2="323.2" y2="478.5" stroke="#c6c6c6" stroke-width="0.9"/>
<line x1="371.1" y1="94.5" x2="371.1" y2="478.5" stroke="#c6c6c6" stroke-width="0.9"/>
<line x1="419" y1="94.5" x2="419" y2="478.5" stroke="#c6c6c6" stroke-width="0.9"/>
<line x1="466.9" y1="94.5" x2="466.9" y2="478.5" stroke="#c6c6c6" stroke-width="0.9"/>
<line x1="514.8" y1="94.5" x2="514.8" y2="478.5" stroke="#c6c6c6" stroke-width="0.9"/>
<line x1="562.7" y1="94.5" x2="562.7" y2="478.5" stroke="#c6c6c6" stroke-width="0.9"/>
<line x1="610.6" y1="94.5" x2="610.6" y2="478.5" stroke="#c6c6c6" stroke-width="0.9"/>
<line x1="658.5" y1="94.5" x2="658.5" y2="478.5" stroke="#c6c6c6" stroke-width="0.9"/>
<line x1="706.4" y1="94.5" x2="706.4" y2="478.5" stroke="#c6c6c6" stroke-width="0.9"/>
<line x1="754.3" y1="94.5" x2="754.3" y2="478.5" stroke="#c6c6c6" stroke-width="0.9"/>
<line x1="127.5" y1="94.5" x2="149.7" y2="94.5" stroke="#808080" stroke-width="0.9"/>
<line x1="128.5" y1="95.4" x2="148.7" y2="95.4" stroke="#ffffff" stroke-width="0.7"/>
<line x1="127.5" y1="106.5" x2="149.7" y2="106.5" stroke="#808080" stroke-width="0.9"/>
<line x1="128.5" y1="107.4" x2="148.7" y2="107.4" stroke="#ffffff" stroke-width="0.7"/>
<line x1="127.5" y1="118.5" x2="149.7" y2="118.5" stroke="#808080" stroke-width="0.9"/>
<line x1="128.5" y1="119.4" x2="148.7" y2="119.4" stroke="#ffffff" stroke-width="0.7"/>
<line x1="127.5" y1="130.5" x2="149.7" y2="130.5" stroke="#808080" stroke-width="0.9"/>
<line x1="128.5" y1="131.4" x2="148.7" y2="131.4" stroke="#ffffff" stroke-width="0.7"/>
<line x1="127.5" y1="142.5" x2="149.7" y2="142.5" stroke="#808080" stroke-width="0.9"/>
<line x1="128.5" y1="143.4" x2="148.7" y2="143.4" stroke="#ffffff" stroke-width="0.7"/>
<line x1="127.5" y1="154.5" x2="149.7" y2="154.5" stroke="#808080" stroke-width="0.9"/>
<line x1="128.5" y1="155.4" x2="148.7" y2="155.4" stroke="#ffffff" stroke-width="0.7"/>
<line x1="127.5" y1="166.5" x2="149.7" y2="166.5" stroke="#808080" stroke-width="0.9"/>
<line x1="128.5" y1="167.4" x2="148.7" y2="167.4" stroke="#ffffff" stroke-width="0.7"/>
<line x1="127.5" y1="178.5" x2="149.7" y2="178.5" stroke="#808080" stroke-width="0.9"/>
<line x1="128.5" y1="179.4" x2="148.7" y2="179.4" stroke="#ffffff" stroke-width="0.7"/>
<line x1="127.5" y1="190.5" x2="149.7" y2="190.5" stroke="#808080" stroke-width="0.9"/>
<line x1="128.5" y1="191.4" x2="148.7" y2="191.4" stroke="#ffffff" stroke-width="0.7"/>
<line x1="127.5" y1="202.5" x2="149.7" y2="202.5" stroke="#808080" stroke-width="0.9"/>
<line x1="128.5" y1="203.4" x2="148.7" y2="203.4" stroke="#ffffff" stroke-width="0.7"/>
<line x1="127.5" y1="214.5" x2="149.7" y2="214.5" stroke="#808080" stroke-width="0.9"/>
<line x1="128.5" y1="215.4" x2="148.7" y2="215.4" stroke="#ffffff" stroke-width="0.7"/>
<line x1="127.5" y1="226.5" x2="149.7" y2="226.5" stroke="#808080" stroke-width="0.9"/>
<line x1="128.5" y1="227.4" x2="148.7" y2="227.4" stroke="#ffffff" stroke-width="0.7"/>
<line x1="127.5" y1="238.5" x2="149.7" y2="238.5" stroke="#808080" stroke-width="0.9"/>
<line x1="128.5" y1="239.4" x2="148.7" y2="239.4" stroke="#ffffff" stroke-width="0.7"/>
<line x1="127.5" y1="250.5" x2="149.7" y2="250.5" stroke="#808080" stroke-width="0.9"/>
<line x1="128.5" y1="251.4" x2="148.7" y2="251.4" stroke="#ffffff" stroke-width="0.7"/>
<line x1="127.5" y1="262.5" x2="149.7" y2="262.5" stroke="#808080" stroke-width="0.9"/>
<line x1="128.5" y1="263.4" x2="148.7" y2="263.4" stroke="#ffffff" stroke-width="0.7"/>
<line x1="127.5" y1="274.5" x2="149.7" y2="274.5" stroke="#808080" stroke-width="0.9"/>
<line x1="128.5" y1="275.4" x2="148.7" y2="275.4" stroke="#ffffff" stroke-width="0.7"/>
<line x1="127.5" y1="286.5" x2="149.7" y2="286.5" stroke="#808080" stroke-width="0.9"/>
<line x1="128.5" y1="287.4" x2="148.7" y2="287.4" stroke="#ffffff" stroke-width="0.7"/>
<line x1="127.5" y1="298.5" x2="149.7" y2="298.5" stroke="#808080" stroke-width="0.9"/>
<line x1="128.5" y1="299.4" x2="148.7" y2="299.4" stroke="#ffffff" stroke-width="0.7"/>
<line x1="127.5" y1="310.5" x2="149.7" y2="310.5" stroke="#808080" stroke-width="0.9"/>
<line x1="128.5" y1="311.4" x2="148.7" y2="311.4" stroke="#ffffff" stroke-width="0.7"/>
<line x1="127.5" y1="322.5" x2="149.7" y2="322.5" stroke="#808080" stroke-width="0.9"/>
<line x1="128.5" y1="323.4" x2="148.7" y2="323.4" stroke="#ffffff" stroke-width="0.7"/>
<line x1="127.5" y1="334.5" x2="149.7" y2="334.5" stroke="#808080" stroke-width="0.9"/>
<line x1="128.5" y1="335.4" x2="148.7" y2="335.4" stroke="#ffffff" stroke-width="0.7"/>
<line x1="127.5" y1="346.5" x2="149.7" y2="346.5" stroke="#808080" stroke-width="0.9"/>
<line x1="128.5" y1="347.4" x2="148.7" y2="347.4" stroke="#ffffff" stroke-width="0.7"/>
<line x1="127.5" y1="358.5" x2="149.7" y2="358.5" stroke="#808080" stroke-width="0.9"/>
<line x1="128.5" y1="359.4" x2="148.7" y2="359.4" stroke="#ffffff" stroke-width="0.7"/>
<line x1="127.5" y1="370.5" x2="149.7" y2="370.5" stroke="#808080" stroke-width="0.9"/>
<line x1="128.5" y1="371.4" x2="148.7" y2="371.4" stroke="#ffffff" stroke-width="0.7"/>
<line x1="127.5" y1="382.5" x2="149.7" y2="382.5" stroke="#808080" stroke-width="0.9"/>
<line x1="128.5" y1="383.4" x2="148.7" y2="383.4" stroke="#ffffff" stroke-width="0.7"/>
<line x1="127.5" y1="394.5" x2="149.7" y2="394.5" stroke="#808080" stroke-width="0.9"/>
<line x1="128.5" y1="395.4" x2="148.7" y2="395.4" stroke="#ffffff" stroke-width="0.7"/>
<line x1="127.5" y1="406.5" x2="149.7" y2="406.5" stroke="#808080" stroke-width="0.9"/>
<line x1="128.5" y1="407.4" x2="148.7" y2="407.4" stroke="#ffffff" stroke-width="0.7"/>
<line x1="127.5" y1="418.5" x2="149.7" y2="418.5" stroke="#808080" stroke-width="0.9"/>
<line x1="128.5" y1="419.4" x2="148.7" y2="419.4" stroke="#ffffff" stroke-width="0.7"/>
<line x1="127.5" y1="430.5" x2="149.7" y2="430.5" stroke="#808080" stroke-width="0.9"/>
<line x1="128.5" y1="431.4" x2="148.7" y2="431.4" stroke="#ffffff" stroke-width="0.7"/>
<line x1="127.5" y1="442.5" x2="149.7" y2="442.5" stroke="#808080" stroke-width="0.9"/>
<line x1="128.5" y1="443.4" x2="148.7" y2="443.4" stroke="#ffffff" stroke-width="0.7"/>
<line x1="127.5" y1="454.5" x2="149.7" y2="454.5" stroke="#808080" stroke-width="0.9"/>
<line x1="128.5" y1="455.4" x2="148.7" y2="455.4" stroke="#ffffff" stroke-width="0.7"/>
<line x1="127.5" y1="466.5" x2="149.7" y2="466.5" stroke="#808080" stroke-width="0.9"/>
<line x1="128.5" y1="467.4" x2="148.7" y2="467.4" stroke="#ffffff" stroke-width="0.7"/>
<line x1="127.5" y1="478.5" x2="149.7" y2="478.5" stroke="#808080" stroke-width="0.9"/>
<line x1="149.7" y1="82.6" x2="149.7" y2="94.5" stroke="#808080" stroke-width="0.9"/>
<line x1="150.6" y1="83.6" x2="150.6" y2="93.5" stroke="#ffffff" stroke-width="0.7"/>
<line x1="179.5" y1="82.6" x2="179.5" y2="94.5" stroke="#808080" stroke-width="0.9"/>
<line x1="180.4" y1="83.6" x2="180.4" y2="93.5" stroke="#ffffff" stroke-width="0.7"/>
<line x1="227.4" y1="82.6" x2="227.4" y2="94.5" stroke="#808080" stroke-width="0.9"/>
<line x1="228.3" y1="83.6" x2="228.3" y2="93.5" stroke="#ffffff" stroke-width="0.7"/>
<line x1="275.3" y1="82.6" x2="275.3" y2="94.5" stroke="#808080" stroke-width="0.9"/>
<line x1="276.2" y1="83.6" x2="276.2" y2="93.5" stroke="#ffffff" stroke-width="0.7"/>
<line x1="323.2" y1="82.6" x2="323.2" y2="94.5" stroke="#808080" stroke-width="0.9"/>
<line x1="324.1" y1="83.6" x2="324.1" y2="93.5" stroke="#ffffff" stroke-width="0.7"/>
<line x1="371.1" y1="82.6" x2="371.1" y2="94.5" stroke="#808080" stroke-width="0.9"/>
<line x1="372" y1="83.6" x2="372" y2="93.5" stroke="#ffffff" stroke-width="0.7"/>
<line x1="419" y1="82.6" x2="419" y2="94.5" stroke="#808080" stroke-width="0.9"/>
<line x1="419.9" y1="83.6" x2="419.9" y2="93.5" stroke="#ffffff" stroke-width="0.7"/>
<line x1="466.9" y1="82.6" x2="466.9" y2="94.5" stroke="#808080" stroke-width="0.9"/>
<line x1="467.8" y1="83.6" x2="467.8" y2="93.5" stroke="#ffffff" stroke-width="0.7"/>
<line x1="514.8" y1="82.6" x2="514.8" y2="94.5" stroke="#808080" stroke-width="0.9"/>
<line x1="515.7" y1="83.6" x2="515.7" y2="93.5" stroke="#ffffff" stroke-width="0.7"/>
<line x1="562.7" y1="82.6" x2="562.7" y2="94.5" stroke="#808080" stroke-width="0.9"/>
<line x1="563.6" y1="83.6" x2="563.6" y2="93.5" stroke="#ffffff" stroke-width="0.7"/>
<line x1="610.6" y1="82.6" x2="610.6" y2="94.5" stroke="#808080" stroke-width="0.9"/>
<line x1="611.5" y1="83.6" x2="611.5" y2="93.5" stroke="#ffffff" stroke-width="0.7"/>
<line x1="658.5" y1="82.6" x2="658.5" y2="94.5" stroke="#808080" stroke-width="0.9"/>
<line x1="659.4" y1="83.6" x2="659.4" y2="93.5" stroke="#ffffff" stroke-width="0.7"/>
<line x1="706.4" y1="82.6" x2="706.4" y2="94.5" stroke="#808080" stroke-width="0.9"/>
<line x1="707.3" y1="83.6" x2="707.3" y2="93.5" stroke="#ffffff" stroke-width="0.7"/>
<line x1="754.3" y1="82.6" x2="754.3" y2="94.5" stroke="#808080" stroke-width="0.9"/>
<line x1="755.2" y1="83.6" x2="755.2" y2="93.5" stroke="#ffffff" stroke-width="0.7"/>
<line x1="127.5" y1="94.5" x2="779.6" y2="94.5" stroke="#808080" stroke-width="0.9"/>
<line x1="149.7" y1="82.6" x2="149.7" y2="478.5" stroke="#808080" stroke-width="0.9"/>
<line x1="127.5" y1="82.6" x2="779.6" y2="82.6" stroke="#6a6a6a" stroke-width="1.1"/>
<line x1="127.5" y1="82.6" x2="127.5" y2="478.5" stroke="#6a6a6a" stroke-width="1"/>
<text x="164.6" y="92.7" font-size="9.4" text-anchor="middle" fill="#2a2a2a">A</text>
<text x="203.45" y="92.9" font-size="9.6" text-anchor="middle" font-weight="bold" font-family="Liberation Serif">I</text>
<line x1="179.5" y1="94.1" x2="227.4" y2="94.1" stroke="#202020" stroke-width="1.4"/>
<text x="251.35" y="92.7" font-size="9.4" text-anchor="middle" fill="#2a2a2a">J</text>
<text x="299.25" y="92.7" font-size="9.4" text-anchor="middle" fill="#2a2a2a">K</text>
<text x="347.15" y="92.7" font-size="9.4" text-anchor="middle" fill="#2a2a2a">O</text>
<text x="395.05" y="92.7" font-size="9.4" text-anchor="middle" fill="#2a2a2a">S</text>
<text x="442.95" y="92.7" font-size="9.4" text-anchor="middle" fill="#2a2a2a">T</text>
<text x="490.85" y="92.7" font-size="9.4" text-anchor="middle" fill="#2a2a2a">U</text>
<text x="538.75" y="92.7" font-size="9.4" text-anchor="middle" fill="#2a2a2a">V</text>
<text x="586.65" y="92.7" font-size="9.4" text-anchor="middle" fill="#2a2a2a">W</text>
<text x="634.55" y="92.7" font-size="9.4" text-anchor="middle" fill="#2a2a2a">X</text>
<text x="682.45" y="92.7" font-size="9.4" text-anchor="middle" fill="#2a2a2a">Y</text>
<text x="730.35" y="92.7" font-size="9.4" text-anchor="middle" fill="#2a2a2a">Z</text>
<text x="775.8" y="92.7" font-size="9.4" text-anchor="middle" fill="#2a2a2a">A</text>
<text x="138.4" y="104.6" font-size="9.7" text-anchor="middle" textLength="5.2" lengthAdjust="spacingAndGlyphs" fill="#2a2a2a">1</text>
<text x="138.4" y="116.6" font-size="9.7" text-anchor="middle" textLength="5.2" lengthAdjust="spacingAndGlyphs" fill="#2a2a2a">2</text>
<text x="138.4" y="128.6" font-size="9.7" text-anchor="middle" textLength="5.2" lengthAdjust="spacingAndGlyphs" fill="#2a2a2a">3</text>
<text x="138.4" y="140.6" font-size="9.7" text-anchor="middle" textLength="5.2" lengthAdjust="spacingAndGlyphs" fill="#2a2a2a">4</text>
<text x="138.4" y="152.6" font-size="9.7" text-anchor="middle" textLength="5.2" lengthAdjust="spacingAndGlyphs" fill="#2a2a2a">5</text>
<text x="138.4" y="164.6" font-size="9.6" text-anchor="middle" font-weight="bold">6</text>
<text x="138.4" y="176.6" font-size="9.7" text-anchor="middle" textLength="15.6" lengthAdjust="spacingAndGlyphs" fill="#2a2a2a">201</text>
<text x="138.4" y="188.6" font-size="9.7" text-anchor="middle" textLength="15.6" lengthAdjust="spacingAndGlyphs" fill="#2a2a2a">202</text>
<text x="138.4" y="200.6" font-size="9.7" text-anchor="middle" textLength="15.6" lengthAdjust="spacingAndGlyphs" fill="#2a2a2a">203</text>
<text x="138.4" y="212.6" font-size="9.7" text-anchor="middle" textLength="15.6" lengthAdjust="spacingAndGlyphs" fill="#2a2a2a">204</text>
<text x="138.4" y="224.6" font-size="9.7" text-anchor="middle" textLength="15.6" lengthAdjust="spacingAndGlyphs" fill="#2a2a2a">205</text>
<text x="138.4" y="236.6" font-size="9.7" text-anchor="middle" textLength="15.6" lengthAdjust="spacingAndGlyphs" fill="#2a2a2a">206</text>
<text x="138.4" y="248.6" font-size="9.7" text-anchor="middle" textLength="15.6" lengthAdjust="spacingAndGlyphs" fill="#2a2a2a">207</text>
<text x="138.4" y="260.6" font-size="9.7" text-anchor="middle" textLength="15.6" lengthAdjust="spacingAndGlyphs" fill="#2a2a2a">208</text>
<text x="138.4" y="272.6" font-size="9.7" text-anchor="middle" textLength="15.6" lengthAdjust="spacingAndGlyphs" fill="#2a2a2a">209</text>
<text x="138.4" y="284.6" font-size="9.7" text-anchor="middle" textLength="15.6" lengthAdjust="spacingAndGlyphs" fill="#2a2a2a">210</text>
<text x="138.4" y="296.6" font-size="9.7" text-anchor="middle" textLength="15.6" lengthAdjust="spacingAndGlyphs" fill="#2a2a2a">211</text>
<text x="138.4" y="308.6" font-size="9.7" text-anchor="middle" textLength="15.6" lengthAdjust="spacingAndGlyphs" fill="#2a2a2a">212</text>
<text x="138.4" y="320.6" font-size="9.7" text-anchor="middle" textLength="15.6" lengthAdjust="spacingAndGlyphs" fill="#2a2a2a">213</text>
<text x="138.4" y="332.6" font-size="9.7" text-anchor="middle" textLength="15.6" lengthAdjust="spacingAndGlyphs" fill="#2a2a2a">214</text>
<text x="138.4" y="344.6" font-size="9.7" text-anchor="middle" textLength="15.6" lengthAdjust="spacingAndGlyphs" fill="#2a2a2a">215</text>
<text x="138.4" y="356.6" font-size="9.7" text-anchor="middle" textLength="15.6" lengthAdjust="spacingAndGlyphs" fill="#2a2a2a">216</text>
<text x="138.4" y="368.6" font-size="9.7" text-anchor="middle" textLength="15.6" lengthAdjust="spacingAndGlyphs" fill="#2a2a2a">217</text>
<text x="138.4" y="380.6" font-size="9.7" text-anchor="middle" textLength="15.6" lengthAdjust="spacingAndGlyphs" fill="#2a2a2a">218</text>
<text x="138.4" y="392.6" font-size="9.7" text-anchor="middle" textLength="15.6" lengthAdjust="spacingAndGlyphs" fill="#2a2a2a">219</text>
<text x="138.4" y="404.6" font-size="9.7" text-anchor="middle" textLength="15.6" lengthAdjust="spacingAndGlyphs" fill="#2a2a2a">220</text>
<text x="138.4" y="416.6" font-size="9.7" text-anchor="middle" textLength="15.6" lengthAdjust="spacingAndGlyphs" fill="#2a2a2a">221</text>
<text x="138.4" y="428.6" font-size="9.7" text-anchor="middle" textLength="15.6" lengthAdjust="spacingAndGlyphs" fill="#2a2a2a">222</text>
<text x="138.4" y="440.6" font-size="9.7" text-anchor="middle" textLength="15.6" lengthAdjust="spacingAndGlyphs" fill="#2a2a2a">223</text>
<text x="138.4" y="452.6" font-size="9.7" text-anchor="middle" textLength="15.6" lengthAdjust="spacingAndGlyphs" fill="#2a2a2a">224</text>
<text x="138.4" y="464.6" font-size="9.7" text-anchor="middle" textLength="15.6" lengthAdjust="spacingAndGlyphs" fill="#2a2a2a">225</text>
<text x="138.4" y="476.6" font-size="9.7" text-anchor="middle" textLength="15.6" lengthAdjust="spacingAndGlyphs" fill="#2a2a2a">226</text>
<line x1="149.1" y1="154.5" x2="149.1" y2="166.5" stroke="#202020" stroke-width="1.2"/>
<text x="151.4" y="104.6" font-size="9.2" textLength="42.8" fill="#2a2a2a">Equipment</text>
<text x="151.4" y="116.6" font-size="9.2" textLength="55.2" fill="#2a2a2a">Recipe Name</text>
<text x="151.4" y="128.6" font-size="9.2" textLength="72.6" fill="#2a2a2a">Recipe Comment</text>
<text x="151.4" y="140.6" font-size="9.2" textLength="26.3" fill="#2a2a2a">Lot ID</text>
<text x="151.2" y="152.6" font-size="9.2" textLength="95.2" fill="#2a2a2a">StartTime / EndTime :</text>
<text x="180.9" y="164.6" font-size="9.2" textLength="36.7" fill="#2a2a2a">Pressure</text>
<text x="228.8" y="164.6" font-size="9.2" textLength="18.4" fill="#2a2a2a">Rate</text>
<text x="276.7" y="164.6" font-size="9.2" textLength="18.6" fill="#2a2a2a">THK</text>
<text x="325.1" y="164.6" font-size="9.2" textLength="42.7" fill="#2a2a2a">EMISSION</text>
<g font-size="9.7" text-anchor="end" fill="#2a2a2a" transform="scale(0.955 1)">
<text x="186.07" y="176.6">0</text><text x="235.92" y="176.6">8.00E+00</text><text x="285.76" y="176.6">4.243</text><text x="335.71" y="176.6">0.004</text><text x="385.24" y="176.6">0.2</text>
<text x="186.07" y="188.6">2</text><text x="235.92" y="188.6">2.60E+00</text><text x="285.76" y="188.6">9.346</text><text x="335.71" y="188.6">0.022</text><text x="385.24" y="188.6">0.19</text>
<text x="186.07" y="200.6">4</text><text x="235.92" y="200.6">1.90E+00</text><text x="285.76" y="200.6">7.909</text><text x="335.71" y="200.6">0.037</text><text x="385.24" y="200.6">0.19</text>
<text x="186.07" y="212.6">6</text><text x="235.92" y="212.6">1.60E+00</text><text x="285.76" y="212.6">8.156</text><text x="335.71" y="212.6">0.054</text><text x="385.24" y="212.6">0.18</text>
<text x="186.07" y="224.6">8</text><text x="235.92" y="224.6">1.50E+00</text><text x="285.76" y="224.6">7.978</text><text x="335.71" y="224.6">0.07</text><text x="385.24" y="224.6">0.19</text>
<text x="186.07" y="236.6">10</text><text x="235.92" y="236.6">1.30E+00</text><text x="285.76" y="236.6">8.181</text><text x="335.71" y="236.6">0.086</text><text x="385.24" y="236.6">0.18</text>
<text x="186.07" y="248.6">12</text><text x="235.92" y="248.6">1.30E+00</text><text x="285.76" y="248.6">7.926</text><text x="335.71" y="248.6">0.102</text><text x="385.24" y="248.6">0.19</text>
<text x="186.07" y="260.6">14</text><text x="235.92" y="260.6">1.20E+00</text><text x="285.76" y="260.6">7.991</text><text x="335.71" y="260.6">0.118</text><text x="385.24" y="260.6">0.18</text>
<text x="186.07" y="272.6">16</text><text x="235.92" y="272.6">1.20E+00</text><text x="285.76" y="272.6">8.01</text><text x="335.71" y="272.6">0.134</text><text x="385.24" y="272.6">0.18</text>
<text x="186.07" y="284.6">18</text><text x="235.92" y="284.6">1.10E+00</text><text x="285.76" y="284.6">7.811</text><text x="335.71" y="284.6">0.15</text><text x="385.24" y="284.6">0.19</text>
<text x="186.07" y="296.6">20</text><text x="235.92" y="296.6">1.10E+00</text><text x="285.76" y="296.6">8.059</text><text x="335.71" y="296.6">0.166</text><text x="385.24" y="296.6">0.19</text>
<text x="186.07" y="308.6">22</text><text x="235.92" y="308.6">1.00E+00</text><text x="285.76" y="308.6">7.961</text><text x="335.71" y="308.6">0.182</text><text x="385.24" y="308.6">0.18</text>
<text x="186.07" y="320.6">24</text><text x="235.92" y="320.6">1.00E+00</text><text x="285.76" y="320.6">7.863</text><text x="335.71" y="320.6">0.198</text><text x="385.24" y="320.6">0.18</text>
<text x="186.07" y="332.6">26</text><text x="235.92" y="332.6">1.00E+00</text><text x="285.76" y="332.6">8.181</text><text x="335.71" y="332.6">0.214</text><text x="385.24" y="332.6">0.18</text>
<text x="186.07" y="344.6">28</text><text x="233.51" y="344.6">9.80E-01</text><text x="285.76" y="344.6">7.659</text><text x="335.71" y="344.6">0.229</text><text x="385.24" y="344.6">0.19</text>
<text x="186.07" y="356.6">30</text><text x="233.51" y="356.6">9.60E-01</text><text x="285.76" y="356.6">8.086</text><text x="335.71" y="356.6">0.246</text><text x="385.24" y="356.6">0.18</text>
<text x="186.07" y="368.6">32</text><text x="233.51" y="368.6">9.60E-01</text><text x="285.76" y="368.6">8.101</text><text x="335.71" y="368.6">0.262</text><text x="385.24" y="368.6">0.18</text>
<text x="186.07" y="380.6">34</text><text x="233.51" y="380.6">9.40E-01</text><text x="285.76" y="380.6">8.211</text><text x="335.71" y="380.6">0.278</text><text x="385.24" y="380.6">0.18</text>
<text x="186.07" y="392.6">36</text><text x="233.51" y="392.6">9.30E-01</text><text x="285.76" y="392.6">8.037</text><text x="335.71" y="392.6">0.294</text><text x="385.24" y="392.6">0.18</text>
<text x="186.07" y="404.6">38</text><text x="233.51" y="404.6">9.10E-01</text><text x="285.76" y="404.6">7.81</text><text x="335.71" y="404.6">0.31</text><text x="385.24" y="404.6">0.18</text>
<text x="186.07" y="416.6">40</text><text x="233.51" y="416.6">9.00E-01</text><text x="285.76" y="416.6">8.101</text><text x="335.71" y="416.6">0.326</text><text x="385.24" y="416.6">0.18</text>
<text x="186.07" y="428.6">42</text><text x="233.51" y="428.6">8.90E-01</text><text x="285.76" y="428.6">7.932</text><text x="335.71" y="428.6">0.342</text><text x="385.24" y="428.6">0.18</text>
<text x="186.07" y="440.6">44</text><text x="233.51" y="440.6">8.90E-01</text><text x="285.76" y="440.6">7.978</text><text x="335.71" y="440.6">0.358</text><text x="385.24" y="440.6">0.18</text>
<text x="186.07" y="452.6">46</text><text x="233.51" y="452.6">8.80E-01</text><text x="285.76" y="452.6">7.998</text><text x="335.71" y="452.6">0.374</text><text x="385.24" y="452.6">0.18</text>
<text x="186.07" y="464.6">48</text><text x="233.51" y="464.6">8.80E-01</text><text x="285.76" y="464.6">7.921</text><text x="335.71" y="464.6">0.39</text><text x="385.24" y="464.6">0.18</text>
<text x="186.07" y="476.6">50</text><text x="233.51" y="476.6">8.80E-01</text><text x="285.76" y="476.6">8.074</text><text x="335.71" y="476.6">0.406</text><text x="385.24" y="476.6">0.18</text>
</g>
<line x1="179.5" y1="82.6" x2="179.5" y2="478.5" stroke="#1a1a1a" stroke-width="0.95"/>
<line x1="127.5" y1="166.5" x2="779.6" y2="166.5" stroke="#1a1a1a" stroke-width="0.95"/>
<rect x="179.6" y="154.7" width="47.9" height="11.7" fill="none" stroke="#000" stroke-width="1.9"/>
<rect x="226.2" y="164.9" width="2.8" height="2.8" fill="#000" stroke="#fff" stroke-width="0.5"/>
<rect x="371.3" y="166.3" width="404.2" height="299.9" fill="#fff" stroke="#444" stroke-width="0.95"/>
<rect x="426.4" y="216.3" width="303.3" height="204.5" fill="#c0c0c0"/>
<path d="M426.4 216.3V420.8M436.07 216.3V420.8M445.74 216.3V420.8M455.41 216.3V420.8M465.08 216.3V420.8M474.75 216.3V420.8M484.42 216.3V420.8M494.09 216.3V420.8M503.76 216.3V420.8M513.43 216.3V420.8M523.1 216.3V420.8M532.77 216.3V420.8M542.44 216.3V420.8M552.11 216.3V420.8M561.78 216.3V420.8M571.45 216.3V420.8M581.12 216.3V420.8M590.79 216.3V420.8M600.46 216.3V420.8M610.13 216.3V420.8M619.8 216.3V420.8M629.47 216.3V420.8M639.14 216.3V420.8M648.81 216.3V420.8M658.48 216.3V420.8M668.15 216.3V420.8M677.82 216.3V420.8M687.49 216.3V420.8M697.16 216.3V420.8M706.83 216.3V420.8M716.5 216.3V420.8M726.17 216.3V420.8M426.4 216.3H729.7M426.4 236.75H729.7M426.4 257.2H729.7M426.4 277.65H729.7M426.4 298.1H729.7M426.4 318.55H729.7M426.4 339H729.7M426.4 359.45H729.7M426.4 379.9H729.7M426.4 400.35H729.7M426.4 420.8H729.7" fill="none" stroke="#202020" stroke-width="0.8"/>
<rect x="426.4" y="216.3" width="303.3" height="204.5" fill="none" stroke="#505050" stroke-width="1"/>
<g font-size="9.3" text-anchor="end" fill="#2c2c2c">
<text x="413.9" y="219.7">10.0</text>
<text x="413.9" y="240.15">9.0</text>
<text x="413.9" y="260.6">8.0</text>
<text x="413.9" y="281.05">7.0</text>
<text x="413.9" y="301.5">6.0</text>
<text x="413.9" y="321.95">5.0</text>
<text x="413.9" y="342.4">4.0</text>
<text x="413.9" y="362.85">3.0</text>
<text x="413.9" y="383.3">2.0</text>
<text x="413.9" y="403.75">1.0</text>
<text x="413.9" y="424.2">0.0</text>
</g>
<g font-size="9.3" fill="#2c2c2c">
<text x="737.7" y="219.7">1</text>
<text x="737.7" y="240.15">0.9</text>
<text x="737.7" y="260.6">0.8</text>
<text x="737.7" y="281.05">0.7</text>
<text x="737.7" y="301.5">0.6</text>
<text x="737.7" y="321.95">0.5</text>
<text x="737.7" y="342.4">0.4</text>
<text x="737.7" y="362.85">0.3</text>
<text x="737.7" y="383.3">0.2</text>
<text x="737.7" y="403.75">0.1</text>
<text x="737.7" y="424.2">0</text>
</g>
<text x="426.4" y="438" font-size="9.3" text-anchor="middle" fill="#2c2c2c">0</text>
<text x="523.1" y="438" font-size="9.3" text-anchor="middle" fill="#2c2c2c">200</text>
<text x="619.8" y="438" font-size="9.3" text-anchor="middle" fill="#2c2c2c">400</text>
<text x="716.5" y="438" font-size="9.3" text-anchor="middle" fill="#2c2c2c">600</text>
<text x="577.2" y="453.3" font-size="9.3" text-anchor="middle" textLength="137.3" lengthAdjust="spacingAndGlyphs" fill="#2c2c2c">Time start from deposition [sec]</text>
<text transform="translate(384.4 318.2) rotate(-90)" font-size="9.4" text-anchor="middle" textLength="139.8" lengthAdjust="spacingAndGlyphs" fill="#2c2c2c">Pressure[×10-4[Pa], Rate[A/s],</text>
<text transform="translate(397.3 318) rotate(-90)" font-size="9.4" text-anchor="middle" textLength="34.7" lengthAdjust="spacingAndGlyphs" fill="#2c2c2c">Thk[kA]</text>
<text transform="translate(761.6 316.6) rotate(-90)" font-size="9.4" text-anchor="middle" textLength="87.5" lengthAdjust="spacingAndGlyphs" fill="#2c2c2c">Emission Current[A]</text>
<polyline points="426.4,257.2 427.37,367.63 428.33,381.94 429.3,388.08 430.27,390.12 431.23,394.22 432.2,394.22 433.17,396.26 434.14,396.26 435.1,398.31 436.07,398.31 437.04,400.35 438,400.35 438.97,400.35 439.94,400.76 440.9,401.17 441.87,401.17 442.84,401.58 443.81,401.78 444.77,402.19 445.74,402.39 446.71,402.6 447.67,402.6 448.64,402.8 449.61,402.8 450.57,402.8 451.54,402.79 452.51,402.76 453.48,402.72 454.44,402.66 455.41,402.6 456.38,402.54 457.34,402.48 458.31,402.44 459.28,402.41 460.25,402.39 461.21,402.37 462.18,402.32 463.15,402.22 464.11,402.11 465.08,401.97 466.05,401.82 467.01,401.66 467.98,401.5 468.95,401.33 469.91,401.18 470.88,401.05 471.85,400.93 472.82,400.84 473.78,400.78 474.75,400.76 475.72,400.74 476.68,400.7 477.65,400.63 478.62,400.54 479.58,400.44 480.55,400.33 481.52,400.21 482.49,400.08 483.45,399.96 484.42,399.85 485.39,399.75 486.35,399.66 487.32,399.59 488.29,399.55 489.25,399.53 490.22,399.54 491.19,399.57 492.16,399.62 493.12,399.68 494.09,399.74 495.06,399.82 496.02,399.9 496.99,399.98 497.96,400.06 498.92,400.14 499.89,400.21 500.86,400.26 501.83,400.31 502.79,400.34 503.76,400.35 504.73,400.36 505.69,400.41 506.66,400.47 507.63,400.56 508.59,400.67 509.56,400.79 510.53,400.93 511.5,401.07 512.46,401.22 513.43,401.37 514.4,401.53 515.36,401.68 516.33,401.82 517.3,401.95 518.26,402.08 519.23,402.18 520.2,402.27 521.17,402.34 522.13,402.38 523.1,402.39 524.07,402.41 525.03,402.44 526,402.49 526.97,402.56 527.93,402.65 528.9,402.75 529.87,402.86 530.84,402.99 531.8,403.12 532.77,403.26 533.74,403.4 534.7,403.55 535.67,403.7 536.64,403.84 537.61,403.99 538.57,404.12 539.54,404.26 540.51,404.38 541.47,404.49 542.44,404.59 543.41,404.68 544.37,404.75 545.34,404.8 546.31,404.84 547.27,404.85 548.24,404.86 549.21,404.88 550.18,404.91 551.14,404.96 552.11,405.02 553.08,405.09 554.04,405.16 555.01,405.24 555.98,405.33 556.94,405.42 557.91,405.52 558.88,405.62 559.85,405.72 560.81,405.81 561.78,405.91 562.75,406 563.71,406.09 564.68,406.17 565.65,406.25 566.62,406.31 567.58,406.37 568.55,406.42 569.52,406.46 570.48,406.48 571.45,406.49 572.42,406.49 573.38,406.51 574.35,406.55 575.32,406.59 576.28,406.64 577.25,406.7 578.22,406.76 579.19,406.82 580.15,406.88 581.12,406.94 582.09,406.99 583.05,407.03 584.02,407.07 584.99,407.09 585.95,407.1 586.92,407.1 587.89,407.1 588.86,407.1 589.82,407.1 590.79,407.1 591.76,407.1 592.72,407.1 593.69,407.1 594.66,407.1 595.62,407.1 596.59,407.1 597.56,407.1 598.53,407.1 599.49,407.1 600.46,407.1 601.43,407.1 602.39,407.1 603.36,407.1 604.33,407.1 605.29,407.1 606.26,407.1 607.23,407.1 608.2,407.1 609.16,407.1 610.13,407.1 611.1,407.1 612.06,407.1 613.03,407.1 614,407.1 614.96,407.1 615.93,407.1 616.9,407.1 617.87,407.1 618.83,407.1 619.8,407.1 620.77,407.1 621.73,407.1 622.7,407.1 623.67,407.1 624.63,407.1 625.6,407.1 626.57,407.1 627.54,407.1 628.5,407.1 629.47,407.1 630.44,407.1 631.4,407.1 632.37,407.1 633.34,407.1 634.3,407.1 635.27,407.1 636.24,407.1 637.21,407.1 638.17,407.1 639.14,407.1 640.11,407.1 641.07,407.1 642.04,407.1 643.01,407.1 643.97,407.1 644.94,407.09 645.91,407.07 646.88,407.03 647.84,406.99 648.81,406.94 649.78,406.88 650.74,406.82 651.71,406.76 652.68,406.7 653.64,406.64 654.61,406.59 655.58,406.55 656.55,406.51 657.51,406.49 658.48,406.49 659.45,406.48 660.41,406.45 661.38,406.41 662.35,406.36 663.31,406.29 664.28,406.22 665.25,406.14 666.22,406.05 667.18,405.96 668.15,405.87 669.12,405.78 670.08,405.69 671.05,405.6 672.02,405.52 672.98,405.45 673.95,405.39 674.92,405.33 675.89,405.29 676.85,405.27 677.82,405.26 678.79,405.25 679.75,405.24 680.72,405.21 681.69,405.17 682.65,405.13 683.62,405.08 684.59,405.03 685.56,404.97 686.52,404.91 687.49,404.85 688.46,404.79 689.42,404.73 690.39,404.67 691.36,404.62 692.33,404.57 693.29,404.53 694.26,404.49 695.23,404.46 696.19,404.45 697.16,404.44 698.13,404.43 699.09,404.41 700.06,404.38 701.03,404.33 701.99,404.28 702.96,404.22 703.93,404.15 704.9,404.08 705.86,404.01 706.83,403.93 707.8,403.85 708.76,403.78 709.73,403.71 710.7,403.64 711.66,403.58 712.63,403.52 713.6,403.48 714.57,403.45 715.53,403.42 716.5,403.42 717.47,403.41 718.43,403.41 719.4,403.39 720.37,403.38 721.34,403.36 722.3,403.34 723.27,403.32 724.24,403.29 725.2,403.27 726.17,403.25 727.14,403.24 728.1,403.22 729.07,403.22" fill="none" stroke="#ff00ff" stroke-width="1.25" stroke-linejoin="round"/>
<line x1="426.4" y1="420.8" x2="729.55" y2="317.12" stroke="#800080" stroke-width="1.25"/>
<polyline points="426.4,379.9 427.37,381.94 428.33,383.99 429.3,382.97 430.27,381.94 431.23,383.99 432.2,383.99 433.17,383.99 434.14,383.99 435.1,381.94 436.07,383.99 437.04,383.99 438,383.99 438.97,383.99 439.94,383.99 440.9,383.99 441.87,382.97 442.84,382.97 443.81,383.99 444.77,383.99 445.74,383.99 446.71,383.99 447.67,382.97 448.64,383.99 449.61,383.99 450.57,383.99 451.54,383.99 452.51,381.94 453.48,381.94 454.44,383.99 455.41,383.99 456.38,383.99 457.34,383.99 458.31,382.97 459.28,383.99 460.25,383.99 461.21,383.99 462.18,383.99 463.15,383.99 464.11,381.94 465.08,382.97 466.05,383.99 467.01,383.99 467.98,383.99 468.95,383.99 469.91,381.94 470.88,383.99 471.85,381.94 472.82,383.99 473.78,383.99 474.75,383.99 475.72,383.99 476.68,381.94 477.65,383.99 478.62,381.94 479.58,383.99 480.55,383.99 481.52,381.94 482.49,383.99 483.45,383.99 484.42,383.99 485.39,383.99 486.35,383.99 487.32,382.97 488.29,381.94 489.25,381.54 490.22,381.94 491.19,380.92 492.16,381.54 493.12,381.54 494.09,380.92 495.06,381.54 496.02,381.54 496.99,381.54 497.96,381.54 498.92,381.54 499.89,381.54 500.86,381.54 501.83,381.54 502.79,380.92 503.76,381.54 504.73,381.54 505.69,381.54 506.66,381.54 507.63,381.54 508.59,381.94 509.56,381.54 510.53,380.92 511.5,381.54 512.46,381.54 513.43,381.94 514.4,381.54 515.36,381.54 516.33,381.54 517.3,380.92 518.26,380.92 519.23,380.92 520.2,381.54 521.17,381.54 522.13,381.54 523.1,381.54 524.07,381.54 525.03,381.54 526,381.54 526.97,381.54 527.93,381.54 528.9,381.54 529.87,381.54 530.84,383.99 531.8,380.92 532.77,381.54 533.74,381.54 534.7,380.92 535.67,381.54 536.64,381.54 537.61,381.54 538.57,381.54 539.54,381.54 540.51,383.99 541.47,381.54 542.44,381.54 543.41,381.94 544.37,381.94 545.34,381.54 546.31,381.54 547.27,381.54 548.24,381.54 549.21,381.94 550.18,381.54 551.14,381.54 552.11,381.54 553.08,383.99 554.04,381.54 555.01,381.54 555.98,381.94 556.94,380.92 557.91,381.94 558.88,381.54 559.85,381.54 560.81,381.54 561.78,381.54 562.75,383.99 563.71,381.54 564.68,381.54 565.65,381.54 566.62,381.54 567.58,381.54 568.55,381.54 569.52,381.54 570.48,381.54 571.45,381.54 572.42,381.94 573.38,381.54 574.35,380.92 575.32,380.92 576.28,381.54 577.25,381.54 578.22,381.54 579.19,381.54 580.15,381.54 581.12,381.94 582.09,381.94 583.05,381.94 584.02,381.94 584.99,381.54 585.95,383.99 586.92,381.94 587.89,381.54 588.86,381.54 589.82,381.54 590.79,381.54 591.76,381.54 592.72,381.54 593.69,381.54 594.66,380.92 595.62,381.54 596.59,381.54 597.56,381.54 598.53,381.54 599.49,381.54 600.46,381.54 601.43,380.92 602.39,381.54 603.36,381.54 604.33,381.54 605.29,381.94 606.26,381.54 607.23,381.54 608.2,380.92 609.16,380.92 610.13,381.54 611.1,381.54 612.06,381.54 613.03,381.54 614,381.54 614.96,381.54 615.93,381.54 616.9,381.54 617.87,381.54 618.83,381.54 619.8,381.54 620.77,380.92 621.73,381.54 622.7,381.54 623.67,381.54 624.63,381.54 625.6,381.54 626.57,381.54 627.54,381.54 628.5,380.92 629.47,381.54 630.44,381.54 631.4,381.54 632.37,381.54 633.34,381.54 634.3,381.54 635.27,381.54 636.24,381.54 637.21,380.92 638.17,381.54 639.14,379.9 640.11,381.54 641.07,379.9 642.04,381.54 643.01,381.54 643.97,380.92 644.94,381.54 645.91,381.54 646.88,381.54 647.84,381.94 648.81,381.54 649.78,381.54 650.74,381.54 651.71,381.54 652.68,380.92 653.64,381.54 654.61,381.54 655.58,381.54 656.55,381.54 657.51,381.54 658.48,381.54 659.45,380.92 660.41,381.54 661.38,380.92 662.35,379.9 663.31,381.54 664.28,381.54 665.25,381.54 666.22,381.54 667.18,381.54 668.15,381.54 669.12,380.92 670.08,381.54 671.05,381.54 672.02,381.54 672.98,381.54 673.95,380.92 674.92,381.54 675.89,381.54 676.85,381.94 677.82,381.54 678.79,381.54 679.75,381.54 680.72,381.94 681.69,380.92 682.65,381.54 683.62,381.94 684.59,381.54 685.56,381.94 686.52,381.54 687.49,381.54 688.46,381.54 689.42,381.54 690.39,381.54 691.36,381.54 692.33,381.54 693.29,381.54 694.26,381.54 695.23,380.92 696.19,381.54 697.16,381.54 698.13,381.54 699.09,381.54 700.06,381.54 701.03,381.54 701.99,381.54 702.96,381.54 703.93,381.54 704.9,381.94 705.86,381.54 706.83,381.54 707.8,381.54 708.76,381.54 709.73,381.54 710.7,381.54 711.66,381.54 712.63,381.54 713.6,380.92 714.57,381.54 715.53,381.54 716.5,381.94 717.47,381.54 718.43,381.54 719.4,380.92 720.37,381.54 721.34,381.54 722.3,381.94 723.27,381.54 724.24,381.54 725.2,381.54 726.17,381.54 727.14,381.54 728.1,381.54 729.07,381.54" fill="none" stroke="#10f020" stroke-width="1.2" stroke-linejoin="round"/>
<polyline points="426.4,334.03 427.37,229.67 428.33,259.06 429.3,254.01 430.27,257.65 431.23,253.5 432.2,258.71 433.17,257.38 434.14,257 435.1,261.07 436.07,255.99 437.04,258 438,260 438.97,253.5 439.94,264.17 440.9,255.44 441.87,255.13 442.84,252.89 443.81,256.44 444.77,261.09 445.74,255.13 446.71,258.59 447.67,257.65 448.64,257.24 449.61,258.82 450.57,255.69 451.54,256.33 452.51,259.34 453.48,257.41 454.44,252.86 455.41,258.44 456.38,259.19 457.34,257.5 458.31,262.78 459.28,258.09 460.25,263.81 461.21,256.16 462.18,258.09 463.15,260.04 464.11,257.93 465.08,260.29 466.05,258.18 467.01,257.17 467.98,258.33 468.95,258.65 469.91,257.14 470.88,249.51 471.85,256.8 472.82,258.54 473.78,252.25 474.75,257.82 475.72,258.36 476.68,258.24 477.65,258.57 478.62,258.87 479.58,251.12 480.55,258.53 481.52,256.66 482.49,258.83 483.45,249.14 484.42,263.23 485.39,255.33 486.35,256.95 487.32,255.94 488.29,259.14 489.25,260.46 490.22,259.24 491.19,257.95 492.16,257.57 493.12,258.56 494.09,257.29 495.06,257.76 496.02,253.5 496.99,256.87 497.96,260.18 498.92,264.91 499.89,254.82 500.86,259.04 501.83,256.24 502.79,258.53 503.76,259.54 504.73,257.2 505.69,264.67 506.66,257.83 507.63,258.73 508.59,257.9 509.56,258.87 510.53,259.27 511.5,256.78 512.46,258.01 513.43,257.01 514.4,246.26 515.36,263.42 516.33,258.08 517.3,258.19 518.26,257.64 519.23,261.08 520.2,257.94 521.17,257.06 522.13,263.92 523.1,259.5 524.07,264.19 525.03,257.66 526,262.85 526.97,258.33 527.93,250.32 528.9,256.8 529.87,256.53 530.84,258.17 531.8,258.19 532.77,256.36 533.74,255.67 534.7,257.64 535.67,259.77 536.64,258.32 537.61,258.28 538.57,259.11 539.54,257.92 540.51,256.08 541.47,258.91 542.44,255.95 543.41,257.63 544.37,260.47 545.34,258.29 546.31,256.66 547.27,262.32 548.24,258.71 549.21,257.99 550.18,255.24 551.14,249.82 552.11,257.85 553.08,259.2 554.04,257.62 555.01,255.76 555.98,269.79 556.94,257.23 557.91,256.15 558.88,257.31 559.85,258.69 560.81,256.26 561.78,256.87 562.75,256.77 563.71,257.12 564.68,257.31 565.65,258.12 566.62,256.47 567.58,265.82 568.55,258.14 569.52,256.52 570.48,257.14 571.45,259.89 572.42,260.67 573.38,257.83 574.35,258.77 575.32,252.53 576.28,258.54 577.25,247.99 578.22,258.68 579.19,259.45 580.15,256.71 581.12,257.02 582.09,257.06 583.05,260.15 584.02,264.71 584.99,257.82 585.95,257.36 586.92,255.33 587.89,256.52 588.86,257.89 589.82,257.42 590.79,255.88 591.76,255.18 592.72,257.5 593.69,268.71 594.66,259.84 595.62,256.34 596.59,255.32 597.56,256.43 598.53,256.22 599.49,255.92 600.46,258.53 601.43,258.05 602.39,257.89 603.36,255.8 604.33,257.71 605.29,249.03 606.26,256.53 607.23,257.16 608.2,258.87 609.16,257.49 610.13,258.69 611.1,258.08 612.06,258.31 613.03,256.75 614,255.35 614.96,257.5 615.93,257.57 616.9,256.87 617.87,258.85 618.83,258.34 619.8,248.54 620.77,260.12 621.73,258.61 622.7,258.85 623.67,257.19 624.63,257.94 625.6,256.74 626.57,270.65 627.54,256.46 628.5,258.47 629.47,248.57 630.44,250.36 631.4,258.53 632.37,268.93 633.34,257.18 634.3,266.28 635.27,256.14 636.24,258.22 637.21,257.76 638.17,258.37 639.14,257.47 640.11,264.31 641.07,256.82 642.04,257.84 643.01,257.74 643.97,262.93 644.94,258.06 645.91,258.15 646.88,258.12 647.84,258.22 648.81,258.79 649.78,256.77 650.74,264.5 651.71,256.88 652.68,256.5 653.64,257.22 654.61,257.34 655.58,256.53 656.55,256.49 657.51,256.73 658.48,268.24 659.45,257.56 660.41,257.56 661.38,257.72 662.35,258.01 663.31,258.57 664.28,263.16 665.25,257.26 666.22,258.67 667.18,259.04 668.15,258.17 669.12,260.13 670.08,264.1 671.05,257.5 672.02,259.73 672.98,258.59 673.95,267.03 674.92,255.75 675.89,259.1 676.85,258.16 677.82,259.53 678.79,257.54 679.75,258.8 680.72,257.14 681.69,264.87 682.65,257.51 683.62,268.03 684.59,255.19 685.56,256.9 686.52,258.29 687.49,265.95 688.46,252.85 689.42,259.89 690.39,257.36 691.36,257.55 692.33,268.22 693.29,253.14 694.26,256.03 695.23,259.9 696.19,257.29 697.16,258.38 698.13,257.36 699.09,259.34 700.06,257.64 701.03,257.44 701.99,257.52 702.96,261.04 703.93,256.07 704.9,256.9 705.86,256.8 706.83,259.87 707.8,258.32 708.76,258.08 709.73,256.86 710.7,257.9 711.66,256.5 712.63,258.34 713.6,260.82 714.57,257.78 715.53,249.85 716.5,257.7 717.47,257.79 718.43,258.94 719.4,257.43 720.37,256.23 721.34,257.3 722.3,256.5 723.27,257.14 724.24,265.53 725.2,259.61 726.17,258.01 727.14,267.76 728.1,255.88 729.07,263.34 729.55,288.9" fill="none" stroke="#000080" stroke-width="1.5" stroke-linejoin="round"/>
<line x1="426.7" y1="229.59" x2="426.7" y2="334.91" stroke="#000080" stroke-width="1.8"/>
<rect x="442.7" y="273.6" width="64" height="50" fill="#fff" stroke="#000" stroke-width="0.9"/>
<line x1="446.6" y1="280.7" x2="465" y2="280.7" stroke="#ff00ff" stroke-width="1.3"/>
<text x="467" y="284.2" font-size="9.3" textLength="36.7" lengthAdjust="spacingAndGlyphs" fill="#2c2c2c">Pressure</text>
<line x1="446.6" y1="292.6" x2="465" y2="292.6" stroke="#000080" stroke-width="1.5"/>
<text x="467" y="296.2" font-size="9.3" fill="#2c2c2c">Rate</text>
<rect x="442.1" y="294.5" width="63.6" height="35.7" fill="#fff"/>
<text x="454.2" y="318.4" font-size="17.5" font-weight="bold" fill="#0a0a14" font-family="&quot;Liberation Serif&quot;, &quot;Noto Serif CJK SC&quot;, serif">图</text>
<text x="474.6" y="318.4" font-size="17.5" font-weight="bold" fill="#0a0a14" font-family="&quot;Liberation Serif&quot;, &quot;Noto Serif CJK SC&quot;, serif">表</text>
<rect x="779.6" y="82.6" width="10.4" height="395.9" fill="url(#dith)"/>
<rect x="779.6" y="83" width="10.4" height="9.2" fill="#d5d2cb"/>
<path d="M780.1 91.7V83.5H789.5" fill="none" stroke="#ffffff" stroke-width="1"/>
<path d="M780.1 91.7H789.5V83.5" fill="none" stroke="#404040" stroke-width="1"/>
<path d="M782.4 89.4h4.8l-2.4-3.2z" fill="#000"/>
<rect x="779.6" y="467.9" width="10.4" height="9" fill="#d5d2cb"/>
<path d="M780.1 476.4V468.4H789.5" fill="none" stroke="#ffffff" stroke-width="1"/>
<path d="M780.1 476.4H789.5V468.4" fill="none" stroke="#404040" stroke-width="1"/>
<path d="M782.4 471h4.8l-2.4 3.2z" fill="#000"/>
<rect x="127.5" y="478.6" width="663.5" height="9.6" fill="#d5d2cb"/>
<line x1="127.5" y1="478.6" x2="779.6" y2="478.6" stroke="#404040" stroke-width="0.9"/>
<line x1="138.1" y1="479.6" x2="138.1" y2="487.6" stroke="#b8b4ac" stroke-width="0.6"/>
<line x1="148.1" y1="479.6" x2="148.1" y2="487.6" stroke="#b8b4ac" stroke-width="0.6"/>
<line x1="158.1" y1="479.6" x2="158.1" y2="487.6" stroke="#b8b4ac" stroke-width="0.6"/>
<path d="M130.4 480.8v5.4" fill="none" stroke="#000" stroke-width="1.1"/>
<path d="M135.6 480.6l-3.8 2.9l3.8 2.9z" fill="#000"/>
<path d="M145.2 480.6l-3.8 2.9l3.8 2.9z" fill="#000"/>
<path d="M151.6 480.6l3.8 2.9l-3.8 2.9z" fill="#000"/>
<path d="M160.6 480.6l3.8 2.9l-3.8 2.9z" fill="#000"/>
<path d="M165.8 480.8v5.4" fill="none" stroke="#000" stroke-width="1.1"/>
<path d="M167.8 479h108.6l-4 9h-100.6z" fill="#fff"/>
<path d="M167.8 479l4 9h100.6l4-9" fill="none" stroke="#000" stroke-width="0.9"/>
<text x="173.2" y="486.6" font-size="8.8" textLength="96.1" lengthAdjust="spacingAndGlyphs">2005-0831-2013 083105</text>
<line x1="173.2" y1="487.4" x2="269.3" y2="487.4" stroke="#000" stroke-width="0.6"/>
<line x1="276" y1="487.8" x2="521" y2="487.8" stroke="#6a6a6a" stroke-width="0.8"/>
<rect x="521.6" y="479" width="258" height="9" fill="url(#dith)"/>
<rect x="520.2" y="479" width="2.6" height="9" fill="#d5d2cb"/>
<path d="M520.7 487.5V479.5H522.3" fill="none" stroke="#ffffff" stroke-width="1"/>
<path d="M520.7 487.5H522.3V479.5" fill="none" stroke="#404040" stroke-width="1"/>
<rect x="523.6" y="479" width="8.2" height="9" fill="#d5d2cb"/>
<path d="M524.1 487.5V479.5H531.3" fill="none" stroke="#ffffff" stroke-width="1"/>
<path d="M524.1 487.5H531.3V479.5" fill="none" stroke="#404040" stroke-width="1"/>
<path d="M529.4 481.4v4.4l-3-2.2z" fill="#000"/>
<rect x="545.4" y="479" width="211.2" height="9" fill="#d8d5ce"/>
<path d="M545.9 487.5V479.5H756.1" fill="none" stroke="#ffffff" stroke-width="1"/>
<path d="M545.9 487.5H756.1V479.5" fill="none" stroke="#404040" stroke-width="1"/>
<rect x="770.4" y="479" width="9.2" height="9" fill="#d5d2cb"/>
<path d="M770.9 487.5V479.5H779.1" fill="none" stroke="#ffffff" stroke-width="1"/>
<path d="M770.9 487.5H779.1V479.5" fill="none" stroke="#404040" stroke-width="1"/>
<path d="M773.6 481.4v4.4l3-2.2z" fill="#000"/>
<rect x="779.6" y="478.6" width="11" height="9.8" fill="#d5d2cb"/>
<path d="M780.2 488.2V479.2H790" fill="none" stroke="#ffffff" stroke-width="0.8"/>
<line x1="109" y1="488.8" x2="791" y2="488.8" stroke="#ffffff" stroke-width="0.8"/>
<line x1="109" y1="506.6" x2="791" y2="506.6" stroke="#808080" stroke-width="0.7"/>
<line x1="109" y1="507.4" x2="791" y2="507.4" stroke="#ffffff" stroke-width="0.6"/>
<line x1="111.5" y1="491" x2="111.5" y2="505" stroke="#ffffff" stroke-width="0.9"/>
<line x1="112.4" y1="491" x2="112.4" y2="505" stroke="#9c988f" stroke-width="0.9"/>
<text x="117.8" y="501.5" font-size="8.8" textLength="48.1" lengthAdjust="spacingAndGlyphs" fill="#1c1c1c" font-family="&quot;Liberation Sans&quot;, &quot;Noto Sans CJK JP&quot;, sans-serif">図形の調整(R)</text>
<line x1="160.2" y1="502.4" x2="163.6" y2="502.4" stroke="#444" stroke-width="0.6"/>
<path d="M168.6 497.75H172.8L170.7 499.85Z" fill="#000"/>
<path d="M181 493.2v8.6l2-1.8l1.6 3.4l1.4-.6l-1.6-3.2h2.8z" fill="#fff" stroke="#111" stroke-width="0.8"/>
<path d="M200.6 496.4a3.6 3.6 0 1 1 -3.4 -1.6" fill="none" stroke="#8a867e" stroke-width="1.1"/>
<path d="M196.4 492.8l2.4 2l-2.8 1z" fill="#8a867e"/>
<circle cx="197.8" cy="498.8" r="1" fill="#8a867e"/>
<line x1="207.4" y1="491" x2="207.4" y2="505" stroke="#a29e96" stroke-width="0.8"/>
<line x1="208.2" y1="491" x2="208.2" y2="505" stroke="#ffffff" stroke-width="0.8"/>
<text x="213.7" y="501.5" font-size="8.8" textLength="51.3" lengthAdjust="spacingAndGlyphs" fill="#1c1c1c" font-family="&quot;Liberation Sans&quot;, &quot;Noto Sans CJK JP&quot;, sans-serif">オートシェイプ(U)</text>
<line x1="259.4" y1="502.4" x2="262.8" y2="502.4" stroke="#444" stroke-width="0.6"/>
<path d="M267.7 497.75H271.9L269.8 499.85Z" fill="#000"/>
<path d="M278.4 493.8l8.4 8.6" fill="none" stroke="#222" stroke-width="0.9"/>
<path d="M294.6 494.4l5.4 5.6" fill="none" stroke="#222" stroke-width="1"/>
<path d="M302 502l-4.2-1.1l3.1-3.1z" fill="#1a1a1a"/>
<path d="M307.4 494.4h10.4v7.8h-10.4z" fill="none" stroke="#3c3c3c" stroke-width="0.85"/>
<ellipse cx="328" cy="498.2" rx="5.3" ry="3.7" fill="none" stroke="#3c3c3c" stroke-width="0.85"/>
<path d="M338.2 493.4h10v9.6h-10z" fill="#e4e4e0" stroke="#333" stroke-width="0.9"/>
<text x="343.2" y="499.8" font-size="6.4" text-anchor="middle" font-weight="bold">A</text>
<path d="M339.6 500.8h7.2M339.6 502.1h7.2" fill="none" stroke="#333" stroke-width="0.6"/>
<path d="M353.5 493.4h10v9.6h-10z" fill="#e4e4e0" stroke="#333" stroke-width="0.9"/>
<text x="359" y="499.2" font-size="6" text-anchor="middle" font-weight="bold">A</text>
<path d="M355.4 494.6v7.4M361.8 494.6v7.4" fill="none" stroke="#333" stroke-width="0.6"/>
<text transform="translate(369.4 503.4) skewX(-18)" font-size="12.5" font-weight="bold" fill="#1428a8" font-family="Liberation Serif">A</text>
<line x1="378.8" y1="493.6" x2="378.8" y2="503" stroke="#1428a8" stroke-width="1.3"/>
<path d="M384.4 493.2h10.4v10h-10.4z" fill="#f8f8f8" stroke="#111" stroke-width="0.9"/>
<circle cx="389.6" cy="496.6" r="1.9" fill="#c83028"/>
<path d="M386.6 502.8q.2-4 3-4t3 4z" fill="#283878"/>
<line x1="398.6" y1="491" x2="398.6" y2="505" stroke="#a29e96" stroke-width="0.8"/>
<line x1="399.4" y1="491" x2="399.4" y2="505" stroke="#ffffff" stroke-width="0.8"/>
<g transform="translate(408.4 497.8) scale(0.88) translate(-408.4 -497.8)" opacity="0.9">
<path d="M405 496.2l3.2-3.2l3.6 3.6l-3.4 3z" fill="#e8e8e8" stroke="#222" stroke-width="0.8"/>
<path d="M411.6 496.6q1.8 1.4 1.4 3.6q-1.6-.6-1.4-3.6z" fill="#2848c0" stroke="#102060" stroke-width="0.5"/>
<path d="M407 493.2q-2-1.8-2.6.6" fill="none" stroke="#222" stroke-width="0.7"/>
<rect x="403.2" y="501.4" width="10" height="2.6" fill="#f8f000"/>
</g>
<path d="M417.6 497.75H421.8L419.7 499.85Z" fill="#000"/>
<path d="M428 499.6l5.4-5.8l1.6 1.4l-5.2 5.6l-2.4.8z" fill="#e8d040" stroke="#222" stroke-width="0.7"/>
<rect x="426.6" y="501.4" width="10" height="2.6" fill="#1838e0"/>
<path d="M440.1 497.75H444.3L442.2 499.85Z" fill="#000"/>
<text x="453.8" y="500.6" font-size="10" text-anchor="middle" font-weight="bold" font-family="Liberation Serif" fill="#14146c">A</text>
<rect x="449" y="501.4" width="9.8" height="2.6" fill="#e41010"/>
<path d="M462.7 497.75H466.9L464.8 499.85Z" fill="#000"/>
<rect x="471.4" y="494.6" width="10" height="1" fill="#111"/>
<rect x="471.4" y="497" width="10" height="1.6" fill="#111"/>
<rect x="471.4" y="500" width="10" height="2.2" fill="#111"/>
<path d="M486.2 495.2h10" fill="none" stroke="#333" stroke-width="0.9" stroke-dasharray="0.8 0.8"/>
<path d="M486.2 497.8h10" fill="none" stroke="#333" stroke-width="0.9" stroke-dasharray="2 1"/>
<path d="M486.2 500.6h10" fill="none" stroke="#333" stroke-width="0.9" stroke-dasharray="3.4 1.2"/>
<path d="M502.6 495h9.6M502.6 498.2h9.6M502.6 501.4h9.6" fill="none" stroke="#111" stroke-width="0.9"/>
<path d="M511.6 493.2l2.6 1.8l-2.6 1.8zM503.4 496.4l-2.6 1.8l2.6 1.8zM511.6 499.6l2.6 1.8l-2.6 1.8z" fill="#111"/>
<rect x="519.8" y="496" width="7.2" height="7.2" fill="#222"/>
<rect x="518.2" y="494.2" width="7.2" height="7.2" fill="#188890" stroke="#0a3c40" stroke-width="0.6"/>
<path d="M533.4 496.6l2.4-3h6l-2.2 3z" fill="#d8ecec" stroke="#506060" stroke-width="0.5"/>
<path d="M539.6 496.6l2.2-3v6.6l-2.2 2.8z" fill="#a8b8b8" stroke="#506060" stroke-width="0.5"/>
<rect x="533.4" y="496.6" width="6.2" height="6.4" fill="#189098" stroke="#0a3c40" stroke-width="0.5"/>
<path d="M547.1 499.65H550.9L549 501.55Z" fill="#000"/>
<line x1="554.3" y1="490" x2="554.3" y2="507" stroke="#9c988f" stroke-width="0.8"/>
<line x1="555.1" y1="490" x2="555.1" y2="507" stroke="#ffffff" stroke-width="0.8"/>
<text x="114.5" y="516.6" font-size="8.6" textLength="23.7" lengthAdjust="spacingAndGlyphs" fill="#1c1c1c" font-family="&quot;Liberation Sans&quot;, &quot;Noto Sans CJK JP&quot;, sans-serif">コマンド</text>
<path d="M560.2 517.8V509.2H583.6" fill="none" stroke="#808080" stroke-width="0.8"/>
<path d="M560.2 517.8H583.6V509.2" fill="none" stroke="#ffffff" stroke-width="0.8"/>
<path d="M584.8 517.8V509.2H659.8" fill="none" stroke="#808080" stroke-width="0.8"/>
<path d="M584.8 517.8H659.8V509.2" fill="none" stroke="#ffffff" stroke-width="0.8"/>
<path d="M661 517.8V509.2H680" fill="none" stroke="#808080" stroke-width="0.8"/>
<path d="M661 517.8H680V509.2" fill="none" stroke="#ffffff" stroke-width="0.8"/>
<path d="M681.2 517.8V509.2H704.2" fill="none" stroke="#808080" stroke-width="0.8"/>
<path d="M681.2 517.8H704.2V509.2" fill="none" stroke="#ffffff" stroke-width="0.8"/>
<path d="M705.4 517.8V509.2H724.7" fill="none" stroke="#808080" stroke-width="0.8"/>
<path d="M705.4 517.8H724.7V509.2" fill="none" stroke="#ffffff" stroke-width="0.8"/>
<path d="M725.9 517.8V509.2H747.3" fill="none" stroke="#808080" stroke-width="0.8"/>
<path d="M725.9 517.8H747.3V509.2" fill="none" stroke="#ffffff" stroke-width="0.8"/>
<path d="M748.5 517.8V509.2H767.8" fill="none" stroke="#808080" stroke-width="0.8"/>
<path d="M748.5 517.8H767.8V509.2" fill="none" stroke="#ffffff" stroke-width="0.8"/>
<path d="M769 517.8V509.2H787.8" fill="none" stroke="#808080" stroke-width="0.8"/>
<path d="M769 517.8H787.8V509.2" fill="none" stroke="#ffffff" stroke-width="0.8"/>
<path d="M12.2 186.4A17.0 27.8 0 0 1 37.6 158.7A13.4 22.0 0 0 1 58.9 153.4A11.0 18.0 0 0 1 77.4 150.5A12.2 19.9 0 0 1 98.7 159.9A13.4 22.0 0 0 1 107.5 189.7A17.0 27.9 0 0 1 96.4 234.3A14.5 23.8 0 0 1 74.2 254.3A17.0 27.9 0 0 1 43.8 261.7A19.4 31.9 0 0 1 17.0 250.2A11.0 17.9 0 0 1 7.7 220.2A10.9 18.0 0 0 1 12.1 186.8Z" fill="#12cdd9"/>
<circle cx="119.5" cy="254.4" r="8.6" fill="#12cdd9"/>
<circle cx="141.2" cy="269.9" r="5.8" fill="#12cdd9"/>
<circle cx="158.7" cy="282.2" r="2.7" fill="#12cdd9"/>
<text x="29.4" y="190.8" font-size="20.4" font-weight="bold" textLength="38.8" lengthAdjust="spacingAndGlyphs" stroke="#000" stroke-width="0.55">LOG</text>
<text x="29" y="221" font-size="24" font-weight="bold" textLength="46.4" lengthAdjust="spacingAndGlyphs" fill="#000" stroke="#000" stroke-width="0.4" font-family="&quot;Liberation Sans&quot;, &quot;Noto Sans CJK SC&quot;, sans-serif">数据</text>
<path d="M775.6 195.8A16.6 28.5 0 0 1 800.4 167.4A13.1 22.6 0 0 1 821.2 161.9A10.7 18.5 0 0 1 839.3 158.9A11.9 20.5 0 0 1 860.2 168.5A13.1 22.6 0 0 1 868.8 199.2A16.7 28.6 0 0 1 858.0 245.0A14.2 24.4 0 0 1 836.2 265.6A16.6 28.6 0 0 1 806.5 273.2A19.0 32.8 0 0 1 780.3 261.4A10.7 18.4 0 0 1 771.2 230.6A10.7 18.5 0 0 1 775.5 196.3Z" fill="url(#rg)"/>
<circle cx="758" cy="259.5" r="8.2" fill="#b03232"/>
<circle cx="736.8" cy="275.3" r="5.7" fill="#a02d2d"/>
<circle cx="720" cy="287.4" r="2.4" fill="#a83030"/>
<g font-size="24" font-weight="bold" fill="#000" stroke="#000" stroke-width="0.4" font-family="&quot;Liberation Sans&quot;, &quot;Noto Sans CJK SC&quot;, sans-serif">
<text x="792.9" y="199.2" textLength="46.4" lengthAdjust="spacingAndGlyphs">作成</text>
<text x="792.9" y="228.5" textLength="46.4" lengthAdjust="spacingAndGlyphs">图表</text>
<text x="792.9" y="257.8" textLength="46.4" lengthAdjust="spacingAndGlyphs">分析</text>
</g>
</svg>
</body></html>
